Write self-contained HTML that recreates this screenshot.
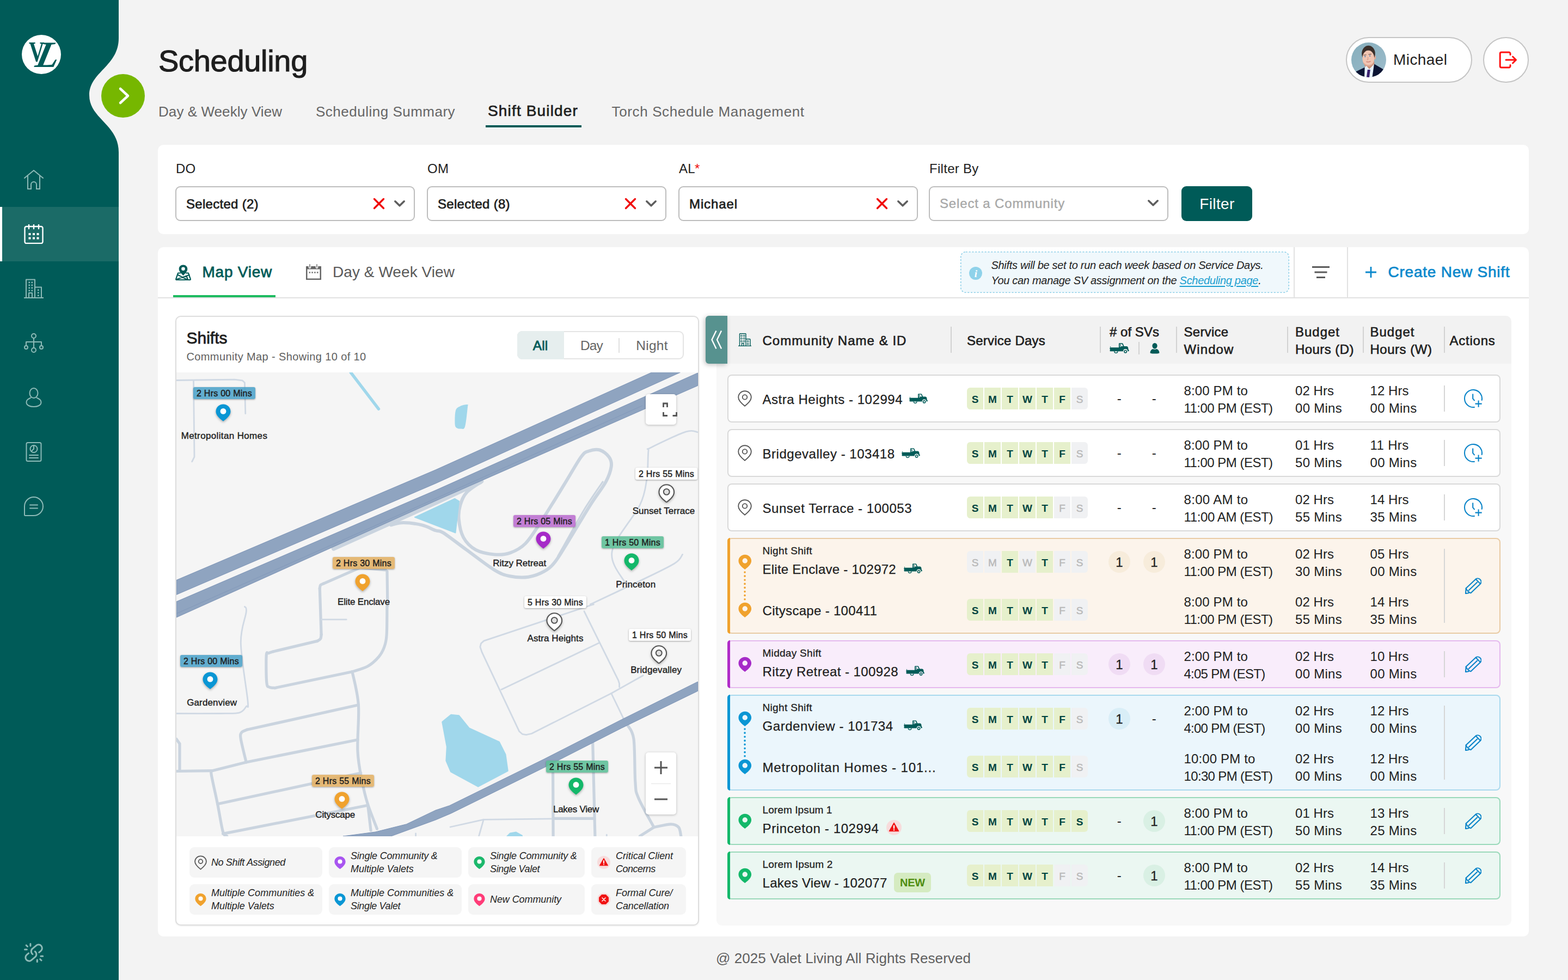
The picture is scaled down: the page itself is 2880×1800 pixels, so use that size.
<!DOCTYPE html>
<html lang="en"><head><meta charset="utf-8"><title>Scheduling - Shift Builder</title><style>
html,body{margin:0;padding:0}
body{width:2880px;height:1800px;position:relative;overflow:hidden;background:#f3f3f3;font-family:"Liberation Sans",sans-serif;}
.t{position:absolute;white-space:nowrap;margin:0}
.b{position:absolute;display:block}
@media (max-width:1500px){html{zoom:.5}}
</style></head>
<body>
<svg class="b" style="left:0px;top:0px;" width="240" height="1800" viewBox="0 0 240 1800"><path d="M0 0H218V70C218 122 164 132 164 175C164 218 218 228 218 280V1800H0Z" fill="#005b58"/></svg>
<div class="b" style="left:0px;top:380px;width:218px;height:100px;background:#1b6b67;"></div>
<div class="b" style="left:0px;top:380px;width:4px;height:100px;background:#ffffff;"></div>
<div class="b" style="left:40px;top:64px;width:72px;height:72px;background:#fff;border-radius:36px;"></div>
<div class="t" style="top:62.2px;font-size:52px;line-height:68px;color:#005b58;letter-spacing:0.00px;font-weight:700;left:52.5px;font-family:'Liberation Serif',serif;transform:scaleX(.76);transform-origin:0 50%;">V</div>
<div class="t" style="top:55.6px;font-size:68px;line-height:88px;color:#005b58;letter-spacing:0.00px;font-weight:700;font-style:italic;left:58.0px;font-family:'Liberation Serif',serif;transform:skewX(-13deg);transform-origin:0 100%;">L</div>
<div class="b" style="left:186px;top:136px;width:80px;height:80px;background:#76b700;border-radius:40px;"></div>
<svg class="b" style="left:186px;top:136px;" width="80" height="80" viewBox="0 0 80 80"><path d="M35 27L49 40L35 53" fill="none" stroke="#fff" stroke-width="4.5" stroke-linecap="round" stroke-linejoin="round"/></svg>
<svg class="b" style="left:44px;top:312px;" width="36" height="36" viewBox="0 0 36 36"><g fill="none" stroke="#8dbab7" stroke-width="2" stroke-linejoin="round" stroke-linecap="round"><path d="M1 15L18 1L35 15" stroke-linejoin="miter"/><path d="M7 11V35H13V27A5 5 0 0 1 23 27V35H29V11" stroke-linejoin="miter"/></g></svg>
<svg class="b" style="left:44px;top:412px;" width="36" height="36" viewBox="0 0 36 36"><g fill="none" stroke="#fff" stroke-width="2.4" stroke-linecap="round"><rect x="1.5" y="4" width="33" height="31" rx="3"/><path d="M9 0.5V8M18 0.5V8M27 0.5V8"/></g><rect x="8.5" y="16" width="4" height="4" fill="#fff" stroke="none"/><rect x="16" y="16" width="4" height="4" fill="#fff" stroke="none"/><rect x="23.5" y="16" width="4" height="4" fill="#fff" stroke="none"/><rect x="8.5" y="23.5" width="4" height="4" fill="#fff" stroke="none"/><rect x="16" y="23.5" width="4" height="4" fill="#fff" stroke="none"/><rect x="23.5" y="23.5" width="4" height="4" fill="#fff" stroke="none"/></svg>
<svg class="b" style="left:44px;top:512px;" width="36" height="36" viewBox="0 0 36 36"><g fill="none" stroke="#8dbab7" stroke-width="2" stroke-linejoin="round" stroke-linecap="round" stroke-linejoin="miter"><path d="M4 35V1.5H20V35M20 15.5H32V35M0.5 35H35.5M9 35V26H15V35"/></g><rect x="8.5" y="5.5" width="2.6" height="2.6" fill="#8dbab7"/><rect x="13.5" y="5.5" width="2.6" height="2.6" fill="#8dbab7"/><rect x="8.5" y="10.5" width="2.6" height="2.6" fill="#8dbab7"/><rect x="13.5" y="10.5" width="2.6" height="2.6" fill="#8dbab7"/><rect x="8.5" y="15.5" width="2.6" height="2.6" fill="#8dbab7"/><rect x="13.5" y="15.5" width="2.6" height="2.6" fill="#8dbab7"/><rect x="8.5" y="20.5" width="2.6" height="2.6" fill="#8dbab7"/><rect x="13.5" y="20.5" width="2.6" height="2.6" fill="#8dbab7"/><rect x="25" y="19.5" width="2.6" height="2.6" fill="#8dbab7"/><rect x="25" y="24.5" width="2.6" height="2.6" fill="#8dbab7"/><rect x="25" y="29.5" width="2.6" height="2.6" fill="#8dbab7"/></svg>
<svg class="b" style="left:44px;top:612px;" width="36" height="36" viewBox="0 0 36 36"><g fill="none" stroke="#8dbab7" stroke-width="2" stroke-linejoin="round" stroke-linecap="round"><circle cx="18" cy="5" r="4"/><circle cx="4" cy="26" r="3"/><circle cx="32" cy="26" r="3"/><circle cx="18" cy="31" r="4"/><path d="M18 9V27M4 23V16H32V23"/></g></svg>
<svg class="b" style="left:44px;top:712px;" width="36" height="36" viewBox="0 0 36 36"><g fill="none" stroke="#8dbab7" stroke-width="2" stroke-linejoin="round" stroke-linecap="round"><ellipse cx="18" cy="10" rx="7.5" ry="9"/><path d="M12.5 18.5C8 21 4.5 22 4.5 27C4.5 33 12 35 18 35C24 35 31.5 33 31.5 27C31.5 22 28 21 23.500 18.5"/></g></svg>
<svg class="b" style="left:44px;top:812px;" width="36" height="36" viewBox="0 0 36 36"><g fill="none" stroke="#8dbab7" stroke-width="2" stroke-linejoin="round" stroke-linecap="round"><rect x="4.500" y="1" width="27" height="34" rx="2.5"/><circle cx="18" cy="12.500" r="6.5"/><path d="M18 6V12.500L13.500 17M10 24H26M10 29H26"/></g></svg>
<svg class="b" style="left:44px;top:912px;" width="36" height="36" viewBox="0 0 36 36"><g fill="none" stroke="#8dbab7" stroke-width="2" stroke-linejoin="round" stroke-linecap="round"><path d="M18 1A17 17 0 0 1 18 35H2.500A1.500 1.500 0 0 1 1 33.500V18A17 17 0 0 1 18 1Z"/><path d="M11 15.500H25M11 21.500H25"/></g></svg>
<svg class="b" style="left:44px;top:1732px;" width="36" height="36" viewBox="0 0 36 36"><g fill="none" stroke="#8dbab7" stroke-width="3" stroke-linecap="round"><path d="M15.900 20.600A6.500 6.500 0 0 1 15.800 10.300L22.600 4.600A6.500 6.500 0 0 1 31 14.600L27.700 17.400"/><path d="M20.300 15.600A6.500 6.500 0 0 1 20.400 25.900L13.600 31.600A6.500 6.500 0 0 1 5.200 21.600L8.500 18.800"/><path d="M11.900 1.500V5.300M4.200 4.200L6.500 6.500M1.500 11.900H5.300M24.300 34.700V30.900M32 32L29.700 29.700M34.700 24.300H30.900"/></g></svg>
<div class="t" style="top:74.6px;font-size:56px;line-height:73px;color:#1e1e1e;letter-spacing:-0.31px;-webkit-text-stroke:1.1px #1e1e1e;left:291.0px;">Scheduling</div>
<div class="t" style="top:188.0px;font-size:26px;line-height:34px;color:#666;letter-spacing:0.07px;left:291.0px;">Day &amp; Weekly View</div>
<div class="t" style="top:188.0px;font-size:26px;line-height:34px;color:#666;letter-spacing:0.50px;left:580.0px;">Scheduling Summary</div>
<div class="t" style="top:186.3px;font-size:28px;line-height:36px;color:#1e1e1e;letter-spacing:1.16px;-webkit-text-stroke:0.7px #1e1e1e;left:896.0px;">Shift Builder</div>
<div class="t" style="top:188.0px;font-size:26px;line-height:34px;color:#666;letter-spacing:0.64px;left:1123.5px;">Torch Schedule Management</div>
<div class="b" style="left:892px;top:230px;width:176px;height:4px;background:#005b58;"></div>
<div class="b" style="left:2472px;top:68px;width:232px;height:84px;background:#fff;border:2px solid #c4c4c4;border-radius:42px;box-sizing:border-box;"></div>
<svg class="b" style="left:2482px;top:78px;" width="64" height="64" viewBox="0 0 64 64"><defs><clipPath id="avc"><circle cx="32" cy="32" r="32"/></clipPath><linearGradient id="avg" x1="0" y1="0" x2="1" y2="1"><stop offset="0" stop-color="#86aebc"/><stop offset="1" stop-color="#9dbccb"/></linearGradient></defs><g clip-path="url(#avc)"><rect width="64" height="64" fill="url(#avg)"/><path d="M24.500 38L42 33.500L42.500 42L33 52L25 46Z" fill="#c98f78"/><path d="M24.600 45.700L27.500 42.500L33 49L42 39.500L38.500 64H24Z" fill="#e6f1fa"/><path d="M0 64L8.500 53.500L24.600 45.700L24 64Z" fill="#0c1433"/><path d="M38.500 64L42 39.500L58.600 49.200L64 58V64Z" fill="#0c1433"/><path d="M29.800 50H34.800L33 64H28Z" fill="#3a2070"/><ellipse cx="43.200" cy="27.500" rx="1.900" ry="3.800" fill="#e2a995"/><ellipse cx="31.500" cy="20.500" rx="12.300" ry="14.800" fill="#3b2f2a"/><ellipse cx="31.300" cy="29.300" rx="10.900" ry="14.800" fill="#f0c5b2"/><path d="M21 35C23 41.500 27 44.100 31.500 44.100C36 44.100 40.500 40.500 42 34C40 39 36 41.500 32 41.500C27.500 41.500 23.500 39 21 35Z" fill="#dca48f"/><path d="M21.500 20C24 15.500 29 13.500 33 14.500C37 15 40.500 18 41.500 22.500C42.500 16 40 11 33 10.500C26 10 22 14 21.500 20Z" fill="#3b2f2a"/><circle cx="25.300" cy="25.900" r="1.100" fill="#4a7ab5"/><circle cx="34.200" cy="24.700" r="1.100" fill="#4a7ab5"/><path d="M22.500 23.300L27.500 22.800M31.500 22L36.800 21.300" stroke="#5a4338" stroke-width="1"/><path d="M27.500 35.400C30 36.200 33 35.800 35.500 34.600" stroke="#c9786f" stroke-width="1.300" fill="none"/><path d="M30.500 27V31.500L28.800 32.300" stroke="#d79a86" stroke-width="1.100" fill="none"/></g></svg>
<div class="t" style="top:91.8px;font-size:28px;line-height:36px;color:#1e1e1e;letter-spacing:0.43px;left:2559.0px;">Michael</div>
<div class="b" style="left:2724px;top:68px;width:84px;height:84px;background:#fff;border:2px solid #c4c4c4;border-radius:42px;box-sizing:border-box;"></div>
<svg class="b" style="left:2748px;top:92px;" width="40" height="40" viewBox="0 0 40 40"><g fill="none" stroke="#ff1010" stroke-width="3" stroke-linecap="round" stroke-linejoin="round"><path d="M26 8.500V6.500A2.500 2.500 0 0 0 23.500 4H9.700A2.500 2.500 0 0 0 7.200 6.500V29.500A2.500 2.500 0 0 0 9.700 32H23.500A2.500 2.500 0 0 0 26 29.500V27.500"/><path d="M18 18H36.500M30.500 12L36.500 18L30.500 24"/></g></svg>
<div class="b" style="left:290px;top:266px;width:2518px;height:164px;background:#fff;border-radius:10px;"></div>
<div class="t" style="top:294.2px;font-size:24px;line-height:31px;color:#1e1e1e;letter-spacing:0.29px;left:323.0px;">DO</div>
<div class="b" style="left:322px;top:342px;width:440px;height:63.5px;background:#fff;border:2px solid #bdbdbd;border-radius:9px;box-sizing:border-box;"></div>
<div class="t" style="top:359.2px;font-size:24px;line-height:31px;color:#1e1e1e;letter-spacing:0.29px;-webkit-text-stroke:0.7px #1e1e1e;left:342.0px;">Selected (2)</div>
<svg class="b" style="left:685px;top:363px;" width="22" height="22" viewBox="0 0 22 22"><path d="M2.500 2.500L19.500 19.500M19.500 2.500L2.500 19.500" fill="none" stroke="#f00a0a" stroke-width="3.4" stroke-linecap="round"/></svg>
<svg class="b" style="left:722px;top:366px;" width="24" height="16" viewBox="0 0 24 16"><path d="M3.800 3.800L12 11.800L20.200 3.800" fill="none" stroke="#5e5e5e" stroke-width="3.600" stroke-linecap="round" stroke-linejoin="round"/></svg>
<div class="t" style="top:294.2px;font-size:24px;line-height:31px;color:#1e1e1e;letter-spacing:0.29px;left:785.0px;">OM</div>
<div class="b" style="left:784px;top:342px;width:440px;height:63.5px;background:#fff;border:2px solid #bdbdbd;border-radius:9px;box-sizing:border-box;"></div>
<div class="t" style="top:359.2px;font-size:24px;line-height:31px;color:#1e1e1e;letter-spacing:0.29px;-webkit-text-stroke:0.7px #1e1e1e;left:804.0px;">Selected (8)</div>
<svg class="b" style="left:1147px;top:363px;" width="22" height="22" viewBox="0 0 22 22"><path d="M2.500 2.500L19.500 19.500M19.500 2.500L2.500 19.500" fill="none" stroke="#f00a0a" stroke-width="3.4" stroke-linecap="round"/></svg>
<svg class="b" style="left:1184px;top:366px;" width="24" height="16" viewBox="0 0 24 16"><path d="M3.800 3.800L12 11.800L20.200 3.800" fill="none" stroke="#5e5e5e" stroke-width="3.600" stroke-linecap="round" stroke-linejoin="round"/></svg>
<div class="t" style="top:294.2px;font-size:24px;line-height:31px;color:#1e1e1e;letter-spacing:0.29px;left:1247.0px;">AL</div>
<div class="t" style="top:294.2px;font-size:24px;line-height:31px;color:#ee1111;letter-spacing:0.29px;left:1276.0px;">*</div>
<div class="b" style="left:1246px;top:342px;width:440px;height:63.5px;background:#fff;border:2px solid #bdbdbd;border-radius:9px;box-sizing:border-box;"></div>
<div class="t" style="top:359.2px;font-size:24px;line-height:31px;color:#1e1e1e;letter-spacing:0.90px;-webkit-text-stroke:0.7px #1e1e1e;left:1266.0px;">Michael</div>
<svg class="b" style="left:1609px;top:363px;" width="22" height="22" viewBox="0 0 22 22"><path d="M2.500 2.500L19.500 19.500M19.500 2.500L2.500 19.500" fill="none" stroke="#f00a0a" stroke-width="3.4" stroke-linecap="round"/></svg>
<svg class="b" style="left:1646px;top:366px;" width="24" height="16" viewBox="0 0 24 16"><path d="M3.800 3.800L12 11.800L20.200 3.800" fill="none" stroke="#5e5e5e" stroke-width="3.600" stroke-linecap="round" stroke-linejoin="round"/></svg>
<div class="t" style="top:294.2px;font-size:24px;line-height:31px;color:#1e1e1e;letter-spacing:0.29px;left:1707.0px;">Filter By</div>
<div class="b" style="left:1706px;top:342px;width:440px;height:63.5px;background:#fff;border:2px solid #bdbdbd;border-radius:9px;box-sizing:border-box;"></div>
<div class="t" style="top:358.2px;font-size:24px;line-height:31px;color:#a8a8a8;letter-spacing:0.85px;-webkit-text-stroke:0.4px #a8a8a8;left:1726.0px;">Select a Community</div>
<svg class="b" style="left:2106px;top:365px;" width="24" height="16" viewBox="0 0 24 16"><path d="M3.800 3.800L12 11.800L20.200 3.800" fill="none" stroke="#5e5e5e" stroke-width="3.600" stroke-linecap="round" stroke-linejoin="round"/></svg>
<div class="b" style="left:2170px;top:342px;width:130px;height:64px;background:#005b58;border-radius:9px;"></div>
<div class="t" style="top:356.6px;font-size:28px;line-height:36px;color:#fff;letter-spacing:0.38px;left:2235.5px;transform:translateX(-50%);">Filter</div>
<div class="b" style="left:290px;top:454px;width:2518px;height:1266px;background:#fff;border-radius:10px;"></div>
<div class="b" style="left:290px;top:546px;width:2518px;height:2px;background:#e2e2e2;"></div>
<svg class="b" style="left:322px;top:486px;" width="29" height="29" viewBox="0 0 29 29"><g fill="none" stroke="#005b58" stroke-width="2.200" stroke-linejoin="round" stroke-linecap="round"><path d="M9 15.500H5L1.200 26.500A1.300 1.300 0 0 0 2.500 28.200H26.500A1.300 1.300 0 0 0 27.800 26.500L24 15.500H20"/><path d="M4 18.500L21.500 27.500M25.500 19L2.500 27M20.500 21L23 27.500"/></g><path d="M14.500 0.500C10 0.500 6.700 3.800 6.700 8C6.700 12.500 11 16.500 14.500 20C18 16.500 22.300 12.500 22.300 8C22.300 3.800 19 0.500 14.500 0.500Z" fill="#005b58"/><circle cx="14.500" cy="7.800" r="3.300" fill="#fff"/></svg>
<div class="t" style="top:482.3px;font-size:28px;line-height:36px;color:#005b58;letter-spacing:0.76px;-webkit-text-stroke:0.8px #005b58;left:371.5px;">Map View</div>
<div class="b" style="left:318px;top:542px;width:188px;height:4px;background:#1dbb60;"></div>
<svg class="b" style="left:562px;top:485px;" width="28" height="29" viewBox="0 0 28 29"><path d="M0 4H28V29H0Z" fill="#666"/><path d="M2.500 9.500H25.500V26.500H2.500Z" fill="#fff"/><path d="M7 0V6M20 0V6" stroke="#fff" stroke-width="4.500" stroke-linecap="round"/><path d="M7 0.800V6M20 0.800V6" stroke="#777" stroke-width="1.600" stroke-linecap="round"/><rect x="5.5" y="14.200" width="2.600" height="2.600" fill="#777"/><rect x="10.3" y="14.200" width="2.600" height="2.600" fill="#777"/><rect x="15.1" y="14.200" width="2.600" height="2.600" fill="#777"/><rect x="19.9" y="14.200" width="2.600" height="2.600" fill="#777"/></svg>
<div class="t" style="top:482.3px;font-size:28px;line-height:36px;color:#5a5a5a;letter-spacing:0.06px;left:611.0px;">Day &amp; Week View</div>
<svg class="b" style="left:1763px;top:461px;" width="606" height="78" viewBox="0 0 606 78"><rect x="1.750" y="1.750" width="602.500" height="74.500" rx="9" fill="#f0f8fc" stroke="#8fd0e8" stroke-width="1.600" stroke-dasharray="3.200 2.600"/></svg>
<div class="b" style="left:1780px;top:490px;width:24px;height:24px;background:#8fd2ea;border-radius:12px;"></div>
<div class="t" style="top:489.9px;font-size:19px;line-height:25px;color:#fff;letter-spacing:0.00px;font-weight:700;font-style:italic;left:1792.5px;transform:translateX(-50%);font-family:'Liberation Serif',serif;">i</div>
<div class="t" style="top:473.6px;font-size:20px;line-height:26px;color:#1e1e1e;letter-spacing:-0.31px;font-style:italic;left:1820.5px;">Shifts will be set to run each week based on Service Days.</div>
<div class="t" style="top:502.1px;font-size:20px;line-height:26px;color:#1e1e1e;letter-spacing:-0.30px;font-style:italic;left:1820.5px;">You can manage SV assignment on the <span style="color:#1b9fd0;text-decoration:underline;text-decoration-thickness:1.500px;text-underline-offset:3px">Scheduling page</span>.</div>
<div class="b" style="left:2376px;top:454px;width:2px;height:92px;background:#e2e2e2;"></div>
<div class="b" style="left:2474px;top:454px;width:2px;height:92px;background:#e2e2e2;"></div>
<svg class="b" style="left:2408px;top:486px;" width="36" height="28" viewBox="0 0 36 28"><path d="M2 4.500H34M6.500 14H29.500M10 23.500H26" stroke="#5a5a5a" stroke-width="3"/></svg>
<svg class="b" style="left:2506px;top:488px;" width="24" height="24" viewBox="0 0 24 24"><path d="M12 2V22M2 12H22" stroke="#0a88cc" stroke-width="2.800"/></svg>
<div class="t" style="top:481.8px;font-size:28px;line-height:36px;color:#0a88cc;letter-spacing:0.77px;-webkit-text-stroke:0.7px #0a88cc;left:2549.5px;">Create New Shift</div>
<div class="b" style="left:322px;top:580px;width:962px;height:1120px;background:#fff;border:2px solid #dedede;border-radius:10px;box-sizing:border-box;box-shadow:0 1px 3px rgba(0,0,0,.08);"></div>
<div class="t" style="top:600.6px;font-size:30px;line-height:39px;color:#1e1e1e;letter-spacing:-0.01px;-webkit-text-stroke:0.8px #1e1e1e;left:342.5px;">Shifts</div>
<div class="t" style="top:642.1px;font-size:20px;line-height:26px;color:#5f5f5f;letter-spacing:0.38px;left:342.5px;">Community Map - Showing 10 of 10</div>
<div class="b" style="left:950px;top:608px;width:306px;height:52px;background:#fff;border:2px solid #e4e4e4;border-radius:9px;box-sizing:border-box;"></div>
<div class="b" style="left:950px;top:608px;width:86px;height:52px;background:#e6eeee;border-radius:9px 0 0 9px;"></div>
<div class="b" style="left:1136px;top:620.5px;width:2px;height:27px;background:#e0e0e0;"></div>
<div class="t" style="top:618.5px;font-size:24.5px;line-height:32px;color:#005b58;letter-spacing:0.09px;-webkit-text-stroke:0.8px #005b58;left:992.5px;transform:translateX(-50%);">All</div>
<div class="t" style="top:618.5px;font-size:24.5px;line-height:32px;color:#666;letter-spacing:-0.85px;left:1086.5px;transform:translateX(-50%);">Day</div>
<div class="t" style="top:618.5px;font-size:24.5px;line-height:32px;color:#666;letter-spacing:0.30px;left:1197.5px;transform:translateX(-50%);">Night</div>
<div class="b" style="left:348px;top:1556px;width:244px;height:56px;background:#f5f5f5;border-radius:9px;"></div>
<svg class="b" style="left:356.5px;top:1571px;" width="23" height="27" viewBox="0 0 28 32"><path d="M14 1.200C7 1.200 1.300 6.700 1.300 13.700C1.300 21 8.800 26.800 14 30.800C19.200 26.800 26.700 21 26.700 13.700C26.700 6.700 21 1.200 14 1.200Z" fill="none" stroke="#5a5a5a" stroke-width="2.2"/><circle cx="14" cy="13.200" r="4.6" fill="none" stroke="#5a5a5a" stroke-width="2.2"/></svg>
<div class="t" style="top:1572.8px;font-size:18px;line-height:23px;color:#1e1e1e;letter-spacing:-0.38px;font-style:italic;left:388.0px;">No Shift Assigned</div>
<div class="b" style="left:604px;top:1556px;width:244px;height:56px;background:#f5f5f5;border-radius:9px;"></div>
<svg class="b" style="left:613.5px;top:1571.5px;" width="21" height="25" viewBox="0 0 28 32"><path d="M14 0.500C6.500 0.500 0.500 6.400 0.500 13.700C0.500 21.500 8.500 27.500 14 31.700C19.500 27.500 27.500 21.500 27.500 13.700C27.500 6.400 21.500 0.500 14 0.500Z" fill="#a855f0"/><circle cx="14" cy="13.400" r="5.400" fill="#fff"/></svg>
<div class="t" style="top:1560.8px;font-size:18px;line-height:23px;color:#1e1e1e;letter-spacing:-0.19px;font-style:italic;left:644.0px;">Single Community &amp;</div>
<div class="t" style="top:1584.8px;font-size:18px;line-height:23px;color:#1e1e1e;letter-spacing:-0.04px;font-style:italic;left:644.0px;">Multiple Valets</div>
<div class="b" style="left:860px;top:1556px;width:214px;height:56px;background:#f5f5f5;border-radius:9px;"></div>
<svg class="b" style="left:869.5px;top:1571.5px;" width="21" height="25" viewBox="0 0 28 32"><path d="M14 0.500C6.500 0.500 0.500 6.400 0.500 13.700C0.500 21.500 8.500 27.500 14 31.700C19.500 27.500 27.500 21.500 27.500 13.700C27.500 6.400 21.500 0.500 14 0.500Z" fill="#1cb86c"/><circle cx="14" cy="13.400" r="5.400" fill="#fff"/></svg>
<div class="t" style="top:1560.8px;font-size:18px;line-height:23px;color:#1e1e1e;letter-spacing:-0.19px;font-style:italic;left:900.0px;">Single Community &amp;</div>
<div class="t" style="top:1584.8px;font-size:18px;line-height:23px;color:#1e1e1e;letter-spacing:-0.35px;font-style:italic;left:900.0px;">Single Valet</div>
<div class="b" style="left:1086px;top:1556px;width:174px;height:56px;background:#f5f5f5;border-radius:9px;"></div>
<svg class="b" style="left:1096.5px;top:1572px;" width="24" height="24" viewBox="0 0 28 28"><circle cx="14" cy="14" r="14" fill="#f7dcdc"/><path d="M14 5.500L22.500 20.500H5.500Z" fill="#f01414" stroke="#f01414" stroke-width="1.500" stroke-linejoin="round"/><path d="M14 10.500V15.500" stroke="#fff" stroke-width="2.200" stroke-linecap="round"/><circle cx="14" cy="18.400" r="1.200" fill="#fff"/></svg>
<div class="t" style="top:1560.8px;font-size:18px;line-height:23px;color:#1e1e1e;letter-spacing:-0.07px;font-style:italic;left:1131.0px;">Critical Client</div>
<div class="t" style="top:1584.8px;font-size:18px;line-height:23px;color:#1e1e1e;letter-spacing:-0.53px;font-style:italic;left:1131.0px;">Concerns</div>
<div class="b" style="left:348px;top:1624px;width:244px;height:56px;background:#f5f5f5;border-radius:9px;"></div>
<svg class="b" style="left:357.5px;top:1639.5px;" width="21" height="25" viewBox="0 0 28 32"><path d="M14 0.500C6.500 0.500 0.500 6.400 0.500 13.700C0.500 21.500 8.500 27.500 14 31.700C19.500 27.500 27.500 21.500 27.500 13.700C27.500 6.400 21.500 0.500 14 0.500Z" fill="#f0a22e"/><circle cx="14" cy="13.400" r="5.400" fill="#fff"/></svg>
<div class="t" style="top:1628.8px;font-size:18px;line-height:23px;color:#1e1e1e;letter-spacing:0.01px;font-style:italic;left:388.0px;">Multiple Communities &amp;</div>
<div class="t" style="top:1652.8px;font-size:18px;line-height:23px;color:#1e1e1e;letter-spacing:-0.04px;font-style:italic;left:388.0px;">Multiple Valets</div>
<div class="b" style="left:604px;top:1624px;width:244px;height:56px;background:#f5f5f5;border-radius:9px;"></div>
<svg class="b" style="left:613.5px;top:1639.5px;" width="21" height="25" viewBox="0 0 28 32"><path d="M14 0.500C6.500 0.500 0.500 6.400 0.500 13.700C0.500 21.500 8.500 27.500 14 31.700C19.500 27.500 27.500 21.500 27.500 13.700C27.500 6.400 21.500 0.500 14 0.500Z" fill="#0a96d4"/><circle cx="14" cy="13.400" r="5.400" fill="#fff"/></svg>
<div class="t" style="top:1628.8px;font-size:18px;line-height:23px;color:#1e1e1e;letter-spacing:0.01px;font-style:italic;left:644.0px;">Multiple Communities &amp;</div>
<div class="t" style="top:1652.8px;font-size:18px;line-height:23px;color:#1e1e1e;letter-spacing:-0.35px;font-style:italic;left:644.0px;">Single Valet</div>
<div class="b" style="left:860px;top:1624px;width:214px;height:56px;background:#f5f5f5;border-radius:9px;"></div>
<svg class="b" style="left:869.5px;top:1639.5px;" width="21" height="25" viewBox="0 0 28 32"><path d="M14 0.500C6.500 0.500 0.500 6.400 0.500 13.700C0.500 21.500 8.500 27.500 14 31.700C19.500 27.500 27.500 21.500 27.500 13.700C27.500 6.400 21.500 0.500 14 0.500Z" fill="#ff3c78"/><circle cx="14" cy="13.400" r="5.400" fill="#fff"/></svg>
<div class="t" style="top:1640.8px;font-size:18px;line-height:23px;color:#1e1e1e;letter-spacing:-0.08px;font-style:italic;left:900.0px;">New Community</div>
<div class="b" style="left:1086px;top:1624px;width:174px;height:56px;background:#f5f5f5;border-radius:9px;"></div>
<svg class="b" style="left:1096.5px;top:1640px;" width="24" height="24" viewBox="0 0 28 28"><circle cx="14" cy="14" r="14" fill="#f7dcdc"/><path d="M9.500 3.500H18.500L24.500 9.500V18.500L18.500 24.500H9.500L3.500 18.500V9.500Z" fill="#f01414"/><path d="M10.500 10.500L17.500 17.500M17.500 10.500L10.500 17.500" stroke="#fff" stroke-width="1.800" stroke-linecap="round"/></svg>
<div class="t" style="top:1628.8px;font-size:18px;line-height:23px;color:#1e1e1e;letter-spacing:-0.06px;font-style:italic;left:1131.0px;">Formal Cure/</div>
<div class="t" style="top:1652.8px;font-size:18px;line-height:23px;color:#1e1e1e;letter-spacing:-0.09px;font-style:italic;left:1131.0px;">Cancellation</div>
<div class="t" style="top:1742.5px;font-size:26px;line-height:34px;color:#5f5f5f;letter-spacing:0.07px;left:1549.0px;transform:translateX(-50%);">@ 2025 Valet Living All Rights Reserved</div>
<svg class="b" style="left:324px;top:684px;overflow:hidden;" width="958" height="852" viewBox="0 0 958 852"><rect width="958" height="852" fill="#f5f5f5"/><path d="M-0.6 14.5 L106.9 13.1 L121.1 14.8 L125.4 18.7 L126.8 75.6" fill="none" stroke="#d0d9e4" stroke-width="2.8" stroke-linecap="round" stroke-linejoin="round"/><path d="M31.5 14.5 L33.0 155.2 L28.7 163.8" fill="none" stroke="#d0d9e4" stroke-width="2.8" stroke-linecap="round" stroke-linejoin="round"/><path d="M957.5 109.8 C953.8 109.7 949.7 104.4 935.3 109.2 C920.9 113.9 882.7 132.4 871.3 138.2 C859.9 144.0 868.0 137.2 867.0 143.9 C866.1 150.5 866.1 169.5 865.6 178.0 C865.1 186.5 866.6 184.2 864.2 195.1 C861.8 206.0 862.1 221.1 851.4 243.4 C840.7 265.7 804.7 304.8 800.2 328.7 C795.7 352.7 820.3 377.3 824.4 387.0" fill="none" stroke="#d0d9e4" stroke-width="2.8" stroke-linecap="round" stroke-linejoin="round"/><path d="M929.6 334.4 C927.0 337.3 927.9 343.0 914.0 351.5 C900.0 360.0 871.3 373.2 845.7 385.6 C820.1 398.0 774.6 419.3 760.4 426.0" fill="none" stroke="#d0d9e4" stroke-width="2.8" stroke-linecap="round" stroke-linejoin="round"/><path d="M561.3 200.2 C556.6 203.6 539.5 213.5 532.9 220.7 C526.2 227.9 523.9 235.4 521.5 243.4 C519.1 251.5 517.7 259.1 518.7 269.0 C519.6 279.0 522.0 293.7 527.2 303.1 C532.4 312.6 540.5 320.7 549.9 325.9 C559.4 331.1 573.6 333.5 584.1 334.4 C594.5 335.4 603.0 334.9 612.5 331.6 C622.0 328.3 631.5 324.0 640.9 314.5 C650.4 305.0 657.5 292.7 669.4 274.7 C681.2 256.7 699.7 226.4 712.0 206.4 C724.4 186.5 735.7 165.6 743.3 155.3 C750.9 144.9 751.9 146.6 757.5 144.5 C763.2 142.3 771.3 140.7 777.5 142.5 C783.6 144.3 791.0 150.3 794.5 155.3 C798.1 160.2 799.7 164.7 798.8 172.3 C797.8 179.9 795.2 188.9 788.8 200.8 C782.4 212.6 771.8 225.4 760.4 243.4 C749.0 261.4 731.5 291.3 720.6 308.8 C709.7 326.4 702.6 339.2 695.0 348.6 C687.4 358.1 683.1 361.2 675.1 365.7 C667.0 370.2 657.1 374.2 646.6 375.7 C636.2 377.1 622.9 376.4 612.5 374.2 C602.1 372.1 597.3 370.9 584.1 362.9 C570.8 354.8 548.5 337.3 532.9 325.9 C517.2 314.5 499.7 300.5 490.2 294.6 C480.7 288.7 482.5 292.7 476.0 290.3 C469.5 288.0 460.8 282.7 451.0 280.4 C441.1 278.0 426.3 276.1 416.8 276.1 C407.4 276.1 397.9 279.6 394.1 280.4" fill="none" stroke="#cad4df" stroke-width="6" stroke-linecap="round" stroke-linejoin="round"/><path d="M783.1 200.8 C777.5 209.3 760.9 232.5 749.0 252.0 C737.2 271.4 720.1 303.1 712.0 317.4 C704.0 331.6 702.6 333.9 700.7 337.3" fill="none" stroke="#cad4df" stroke-width="3" stroke-linecap="round" stroke-linejoin="round"/><path d="M288.9 323.6 L476.6 239.4 L558.5 201.3" fill="none" stroke="#cad4df" stroke-width="8" stroke-linecap="round" stroke-linejoin="round"/><path d="M387.0 365.7 C387.1 375.7 387.8 415.9 387.8 425.9 C387.8 436.0 387.3 416.5 387.0 426.0 C386.7 435.5 387.1 469.6 386.1 482.9 C385.2 496.1 383.8 499.0 381.3 505.6 C378.8 512.3 376.3 517.0 371.4 522.7 C366.4 528.4 359.5 535.2 351.4 539.7 C343.4 544.2 327.8 548.0 323.0 549.7" fill="none" stroke="#cad4df" stroke-width="5.2" stroke-linecap="round" stroke-linejoin="round"/><path d="M323.0 549.7 L180.8 579.6" fill="none" stroke="#cad4df" stroke-width="5.2" stroke-linecap="round" stroke-linejoin="round"/><path d="M180.8 579.6 C179.2 579.3 173.4 579.8 170.9 578.1 C168.4 576.5 166.7 579.3 165.8 569.6 C164.8 559.9 164.6 528.8 165.2 519.8 C165.8 510.8 167.3 516.8 169.5 515.6 C171.6 514.4 176.6 513.2 178.0 512.7" fill="none" stroke="#cad4df" stroke-width="5.2" stroke-linecap="round" stroke-linejoin="round"/><path d="M178.0 512.7 L259.0 493.4" fill="none" stroke="#cad4df" stroke-width="5.2" stroke-linecap="round" stroke-linejoin="round"/><path d="M259.0 493.4 C260.0 492.7 263.5 491.1 264.7 489.1 C265.9 487.1 265.9 482.7 266.1 481.4" fill="none" stroke="#cad4df" stroke-width="5.2" stroke-linecap="round" stroke-linejoin="round"/><path d="M266.1 481.4 L263.3 396.9" fill="none" stroke="#cad4df" stroke-width="5.2" stroke-linecap="round" stroke-linejoin="round"/><path d="M263.3 396.9 C263.5 395.9 263.5 392.2 264.7 390.7 C265.9 389.2 269.5 388.3 270.4 387.8" fill="none" stroke="#cad4df" stroke-width="5.2" stroke-linecap="round" stroke-linejoin="round"/><path d="M270.4 387.8 L337.2 358.6 L384.1 362.8" fill="none" stroke="#cad4df" stroke-width="5.2" stroke-linecap="round" stroke-linejoin="round"/><path d="M266.1 453.9 L312.2 453.9" fill="none" stroke="#d0d9e4" stroke-width="2.8" stroke-linecap="round" stroke-linejoin="round"/><path d="M125.4 430.3 C125.9 431.9 129.4 429.1 128.2 440.2 C127.0 451.4 117.8 469.8 118.3 497.1 C118.7 524.3 129.4 584.3 131.1 603.7 C132.7 623.2 130.8 610.1 128.2 613.7 C125.6 617.2 123.2 622.9 115.4 625.1 C107.6 627.2 100.5 626.2 81.3 626.5 C62.1 626.7 13.5 626.5 -0.0 626.5" fill="none" stroke="#d0d9e4" stroke-width="2.8" stroke-linecap="round" stroke-linejoin="round"/><path d="M323.0 549.7 C324.9 559.9 332.7 586.4 334.4 610.8 C336.0 635.2 331.8 672.4 333.0 696.1 C334.1 719.8 338.4 736.9 341.5 753.0 C344.6 769.1 346.9 778.6 351.4 792.8 C355.9 807.0 365.7 830.7 368.5 838.3" fill="none" stroke="#cad4df" stroke-width="5.2" stroke-linecap="round" stroke-linejoin="round"/><path d="M351.4 792.8 L357.1 841.2" fill="none" stroke="#cad4df" stroke-width="5.2" stroke-linecap="round" stroke-linejoin="round"/><path d="M334.4 610.8 L129.6 656.3" fill="none" stroke="#cad4df" stroke-width="5.2" stroke-linecap="round" stroke-linejoin="round"/><path d="M129.6 656.3 C128.0 657.2 121.6 658.6 119.7 661.4 C117.8 664.3 116.9 664.3 118.3 673.4 C119.7 682.5 126.6 708.9 128.2 716.0" fill="none" stroke="#cad4df" stroke-width="5.2" stroke-linecap="round" stroke-linejoin="round"/><path d="M333.0 674.8 L128.2 716.0 L65.7 731.7 L-0.0 732.5" fill="none" stroke="#cad4df" stroke-width="5.2" stroke-linecap="round" stroke-linejoin="round"/><path d="M-0.0 673.4 L6.0 681.9 L6.0 731.7" fill="none" stroke="#cad4df" stroke-width="5.2" stroke-linecap="round" stroke-linejoin="round"/><path d="M65.7 731.7 C65.4 732.9 62.6 728.6 64.2 738.8 C65.9 749.0 72.1 775.3 75.6 792.8 C79.2 810.4 82.7 834.2 85.6 844.0 C88.4 853.8 91.5 850.4 92.7 851.7" fill="none" stroke="#cad4df" stroke-width="5.2" stroke-linecap="round" stroke-linejoin="round"/><path d="M75.6 792.8 L338.7 735.9" fill="none" stroke="#cad4df" stroke-width="5.2" stroke-linecap="round" stroke-linejoin="round"/><path d="M85.6 847.4 L348.6 795.7" fill="none" stroke="#cad4df" stroke-width="5.2" stroke-linecap="round" stroke-linejoin="round"/><path d="M766.1 426.0 L564.7 493.1 L559.6 497.7 L557.9 504.2 L561.3 514.2 L629.6 659.2 L635.3 664.3 L642.4 665.7 L652.3 663.5 L798.8 589.5 L857.1 556.8" fill="none" stroke="#d0d9e4" stroke-width="2.8" stroke-linecap="round" stroke-linejoin="round"/><path d="M749.0 438.8 L811.6 565.4 L813.6 571.6 L813.6 578.1" fill="none" stroke="#d0d9e4" stroke-width="2.8" stroke-linecap="round" stroke-linejoin="round"/><path d="M596.9 582.4 L776.0 497.1" fill="none" stroke="#d0d9e4" stroke-width="2.8" stroke-linecap="round" stroke-linejoin="round"/><path d="M798.8 589.5 L821.5 636.4" fill="none" stroke="#d0d9e4" stroke-width="2.8" stroke-linecap="round" stroke-linejoin="round"/><path d="M760.4 426.0 L766.1 426.0" fill="none" stroke="#d0d9e4" stroke-width="2.8" stroke-linecap="round" stroke-linejoin="round"/><path d="M828.6 647.8 C830.5 652.1 837.6 655.9 840.0 673.4 C842.4 691.0 841.4 735.0 842.9 753.0 C844.3 771.1 842.9 767.7 848.6 781.5 C854.2 795.2 872.2 826.5 877.0 835.5" fill="none" stroke="#cad4df" stroke-width="5.2" stroke-linecap="round" stroke-linejoin="round"/><path d="M764.7 679.1 L768.9 851.7" fill="none" stroke="#cad4df" stroke-width="5.2" stroke-linecap="round" stroke-linejoin="round"/><path d="M691.6 736.0 L692.1 851.7" fill="none" stroke="#cad4df" stroke-width="5.2" stroke-linecap="round" stroke-linejoin="round"/><path d="M692.1 819.3 L767.5 819.3" fill="none" stroke="#cad4df" stroke-width="5.2" stroke-linecap="round" stroke-linejoin="round"/><path d="M503.0 835.0 L564.2 821.3 L689.3 819.9" fill="none" stroke="#d0d9e4" stroke-width="2.8" stroke-linecap="round" stroke-linejoin="round"/><path d="M564.2 821.3 L555.6 851.7" fill="none" stroke="#d0d9e4" stroke-width="2.8" stroke-linecap="round" stroke-linejoin="round"/><path d="M877.0 835.5 C882.2 834.6 900.7 829.8 908.3 829.8 C915.9 829.8 919.4 831.9 922.5 835.5 C925.6 839.2 926.0 849.0 926.8 851.7" fill="none" stroke="#cad4df" stroke-width="5.2" stroke-linecap="round" stroke-linejoin="round"/><path d="M877.0 835.5 L851.4 851.7" fill="none" stroke="#cad4df" stroke-width="5.2" stroke-linecap="round" stroke-linejoin="round"/><path d="M439.6 846.8 L439.6 851.7" fill="none" stroke="#d0d9e4" stroke-width="2.8" stroke-linecap="round" stroke-linejoin="round"/><path d="M790.3 851.7 L790.3 849.2" fill="none" stroke="#d0d9e4" stroke-width="2.8" stroke-linecap="round" stroke-linejoin="round"/><path d="M320.2 -0.0 L371.4 67.1" stroke="#a0d7eb" stroke-width="5.500" stroke-linecap="round" fill="none"/><path d="M513.0 69.9 C514.6 64.6 517.9 63.8 521.5 62.0 C525.1 60.2 532.1 58.8 534.3 59.1 C536.5 59.5 535.6 57.5 534.9 64.3 C534.2 71.0 532.0 93.3 530.0 99.8 C528.0 106.3 525.5 103.2 522.9 103.5 C520.3 103.8 516.3 103.4 514.4 101.8 C512.5 100.2 511.8 99.4 511.5 94.1 C511.3 88.8 511.3 75.3 513.0 69.9Z" fill="#a0d7eb"/><path d="M438.0 266.0 L511.5 232.0 L519.0 236.5 L512.5 294.5Z" fill="#a0d7eb" stroke="#a0d7eb" stroke-width="2" stroke-linejoin="round"/><path d="M488.8 642.1 L504.4 629.3 L518.7 630.8 L537.1 653.5 L592.6 679.1 L604.0 701.9 L608.2 731.7 L554.2 760.2 L504.4 733.1 L495.9 713.2 L497.3 687.6Z" fill="#a0d7eb" stroke="#a0d7eb" stroke-width="3" stroke-linejoin="round"/><path d="M605.4 852.6 L612.5 845.5 L623.9 843.5 L635.3 849.7 L636.7 852.6Z" fill="#a0d7eb"/><path d="M0.0 381.5 L476.0 179.0 L873.0 0.0 L925.4 0.0 L476.0 204.0 L0.0 408.3Z" fill="#8fa4c0" stroke="#7d94b6" stroke-width="1"/><path d="M0.0 421.0 L476.0 216.5 L957.5 1.0 L957.5 24.4 L476.0 236.0 L0.0 450.0Z" fill="#8fa4c0" stroke="#7d94b6" stroke-width="1"/><path d="M0.0 443.0 L366.0 281.0 L856.0 61.0" fill="none" stroke="#7d94b6" stroke-width="1" opacity=".7"/><path d="M957.5 568.2 L817.3 637.9 L675.0 710.4 L501.6 795.7 L476.0 804.2 L422.5 829.8 L365.7 844.0 L306.0 852.0 L394.0 852.0 L476.0 822.0 L504.4 810.0 L675.0 726.0 L817.3 653.5 L957.5 585.3Z" fill="#8fa4c0" stroke="#7d94b6" stroke-width="1"/></svg>
<div class="b" style="left:355px;top:711px;width:114px;height:22px;background:rgba(70,160,200,.85);border-radius:3px;box-shadow:0 1px 3px rgba(0,0,0,.35);"></div>
<div class="t" style="top:712.0px;font-size:16px;line-height:21px;color:#1e1e1e;letter-spacing:0.25px;-webkit-text-stroke:0.45px #1e1e1e;left:412.0px;transform:translateX(-50%);">2 Hrs 00 Mins</div>
<svg class="b" style="left:396.0px;top:742px;filter:drop-shadow(0 2px 2px rgba(0,0,0,.3));" width="28" height="32" viewBox="0 0 28 32"><path d="M14 0.500C6.500 0.500 0.500 6.400 0.500 13.700C0.500 21.500 8.500 27.500 14 31.700C19.500 27.500 27.500 21.500 27.500 13.700C27.500 6.400 21.500 0.500 14 0.500Z" fill="#0a96d4"/><circle cx="14" cy="13.400" r="5.400" fill="#fff"/></svg>
<div class="t" style="top:789.7px;font-size:17px;line-height:22px;color:#1e1e1e;letter-spacing:0.36px;-webkit-text-stroke:0.4px #1e1e1e;left:412.0px;transform:translateX(-50%);text-shadow:0 0 2px #f5f5f5,0 0 2px #f5f5f5;">Metropolitan Homes</div>
<div class="b" style="left:1167px;top:859px;width:114px;height:22px;background:#ffffff;border-radius:3px;box-shadow:0 1px 3px rgba(0,0,0,.35);"></div>
<div class="t" style="top:860.0px;font-size:16px;line-height:21px;color:#1e1e1e;letter-spacing:0.25px;-webkit-text-stroke:0.45px #1e1e1e;left:1224.0px;transform:translateX(-50%);">2 Hrs 55 Mins</div>
<svg class="b" style="left:1208.75px;top:888.7px;filter:drop-shadow(0 2px 2px rgba(0,0,0,.25));" width="30.5" height="34.8" viewBox="0 0 28 32"><path d="M14 1.200C7 1.200 1.300 6.700 1.300 13.700C1.300 21 8.800 26.800 14 30.800C19.200 26.800 26.700 21 26.700 13.700C26.700 6.700 21 1.200 14 1.200Z" fill="#fff" stroke="#555" stroke-width="1.9"/><circle cx="14" cy="13.200" r="5.0" fill="#e0e0e0" stroke="#555" stroke-width="1.9"/></svg>
<div class="t" style="top:928.2px;font-size:17px;line-height:22px;color:#1e1e1e;letter-spacing:0.04px;-webkit-text-stroke:0.4px #1e1e1e;left:1219.0px;transform:translateX(-50%);text-shadow:0 0 2px #f5f5f5,0 0 2px #f5f5f5;">Sunset Terrace</div>
<div class="b" style="left:943px;top:945.5px;width:114px;height:22px;background:rgba(184,104,206,.85);border-radius:3px;box-shadow:0 1px 3px rgba(0,0,0,.35);"></div>
<div class="t" style="top:946.5px;font-size:16px;line-height:21px;color:#1e1e1e;letter-spacing:0.25px;-webkit-text-stroke:0.45px #1e1e1e;left:1000.0px;transform:translateX(-50%);">2 Hrs 05 Mins</div>
<svg class="b" style="left:984.0px;top:976px;filter:drop-shadow(0 2px 2px rgba(0,0,0,.3));" width="28" height="32" viewBox="0 0 28 32"><path d="M14 0.500C6.500 0.500 0.500 6.400 0.500 13.700C0.500 21.500 8.500 27.500 14 31.700C19.500 27.500 27.500 21.500 27.500 13.700C27.500 6.400 21.500 0.500 14 0.500Z" fill="#a62bc8"/><circle cx="14" cy="13.400" r="5.400" fill="#fff"/></svg>
<div class="t" style="top:1023.7px;font-size:17px;line-height:22px;color:#1e1e1e;letter-spacing:-0.02px;-webkit-text-stroke:0.4px #1e1e1e;left:954.2px;transform:translateX(-50%);text-shadow:0 0 2px #f5f5f5,0 0 2px #f5f5f5;">Ritzy Retreat</div>
<div class="b" style="left:1105px;top:985px;width:114px;height:22px;background:rgba(92,190,150,.88);border-radius:3px;box-shadow:0 1px 3px rgba(0,0,0,.35);"></div>
<div class="t" style="top:986.0px;font-size:16px;line-height:21px;color:#1e1e1e;letter-spacing:0.25px;-webkit-text-stroke:0.45px #1e1e1e;left:1162.0px;transform:translateX(-50%);">1 Hrs 50 Mins</div>
<svg class="b" style="left:1146.0px;top:1016px;filter:drop-shadow(0 2px 2px rgba(0,0,0,.3));" width="28" height="32" viewBox="0 0 28 32"><path d="M14 0.500C6.500 0.500 0.500 6.400 0.500 13.700C0.500 21.500 8.500 27.500 14 31.700C19.500 27.500 27.500 21.500 27.500 13.700C27.500 6.400 21.500 0.500 14 0.500Z" fill="#14b86a"/><circle cx="14" cy="13.400" r="5.400" fill="#fff"/></svg>
<div class="t" style="top:1063.3px;font-size:17px;line-height:22px;color:#1e1e1e;letter-spacing:0.13px;-webkit-text-stroke:0.4px #1e1e1e;left:1167.8px;transform:translateX(-50%);text-shadow:0 0 2px #f5f5f5,0 0 2px #f5f5f5;">Princeton</div>
<div class="b" style="left:611px;top:1023px;width:114px;height:22px;background:rgba(226,176,100,.88);border-radius:3px;box-shadow:0 1px 3px rgba(0,0,0,.35);"></div>
<div class="t" style="top:1024.0px;font-size:16px;line-height:21px;color:#1e1e1e;letter-spacing:0.25px;-webkit-text-stroke:0.45px #1e1e1e;left:668.0px;transform:translateX(-50%);">2 Hrs 30 Mins</div>
<svg class="b" style="left:652.0px;top:1054px;filter:drop-shadow(0 2px 2px rgba(0,0,0,.3));" width="28" height="32" viewBox="0 0 28 32"><path d="M14 0.500C6.500 0.500 0.500 6.400 0.500 13.700C0.500 21.500 8.500 27.500 14 31.700C19.500 27.500 27.500 21.500 27.500 13.700C27.500 6.400 21.500 0.500 14 0.500Z" fill="#f0a22e"/><circle cx="14" cy="13.400" r="5.400" fill="#fff"/></svg>
<div class="t" style="top:1095.4px;font-size:17px;line-height:22px;color:#1e1e1e;letter-spacing:-0.18px;-webkit-text-stroke:0.4px #1e1e1e;left:668.0px;transform:translateX(-50%);text-shadow:0 0 2px #f5f5f5,0 0 2px #f5f5f5;">Elite Enclave</div>
<div class="b" style="left:963px;top:1095px;width:114px;height:22px;background:#ffffff;border-radius:3px;box-shadow:0 1px 3px rgba(0,0,0,.35);"></div>
<div class="t" style="top:1096.0px;font-size:16px;line-height:21px;color:#1e1e1e;letter-spacing:0.25px;-webkit-text-stroke:0.45px #1e1e1e;left:1020.0px;transform:translateX(-50%);">5 Hrs 30 Mins</div>
<svg class="b" style="left:1002.55px;top:1124.8px;filter:drop-shadow(0 2px 2px rgba(0,0,0,.25));" width="30.5" height="34.8" viewBox="0 0 28 32"><path d="M14 1.200C7 1.200 1.300 6.700 1.300 13.700C1.300 21 8.800 26.800 14 30.800C19.200 26.800 26.700 21 26.700 13.700C26.700 6.700 21 1.200 14 1.200Z" fill="#fff" stroke="#555" stroke-width="1.9"/><circle cx="14" cy="13.200" r="5.0" fill="#e0e0e0" stroke="#555" stroke-width="1.9"/></svg>
<div class="t" style="top:1162.0px;font-size:17px;line-height:22px;color:#1e1e1e;letter-spacing:0.07px;-webkit-text-stroke:0.4px #1e1e1e;left:1020.0px;transform:translateX(-50%);text-shadow:0 0 2px #f5f5f5,0 0 2px #f5f5f5;">Astra Heights</div>
<div class="b" style="left:1155px;top:1155px;width:114px;height:22px;background:#ffffff;border-radius:3px;box-shadow:0 1px 3px rgba(0,0,0,.35);"></div>
<div class="t" style="top:1156.0px;font-size:16px;line-height:21px;color:#1e1e1e;letter-spacing:0.25px;-webkit-text-stroke:0.45px #1e1e1e;left:1212.0px;transform:translateX(-50%);">1 Hrs 50 Mins</div>
<svg class="b" style="left:1194.75px;top:1184.7px;filter:drop-shadow(0 2px 2px rgba(0,0,0,.25));" width="30.5" height="34.8" viewBox="0 0 28 32"><path d="M14 1.200C7 1.200 1.300 6.700 1.300 13.700C1.300 21 8.800 26.800 14 30.800C19.200 26.800 26.700 21 26.700 13.700C26.700 6.700 21 1.200 14 1.200Z" fill="#fff" stroke="#555" stroke-width="1.9"/><circle cx="14" cy="13.200" r="5.0" fill="#e0e0e0" stroke="#555" stroke-width="1.9"/></svg>
<div class="t" style="top:1220.2px;font-size:17px;line-height:22px;color:#1e1e1e;letter-spacing:0.12px;-webkit-text-stroke:0.4px #1e1e1e;left:1205.2px;transform:translateX(-50%);text-shadow:0 0 2px #f5f5f5,0 0 2px #f5f5f5;">Bridgevalley</div>
<div class="b" style="left:331px;top:1203px;width:114px;height:22px;background:rgba(70,160,200,.85);border-radius:3px;box-shadow:0 1px 3px rgba(0,0,0,.35);"></div>
<div class="t" style="top:1204.0px;font-size:16px;line-height:21px;color:#1e1e1e;letter-spacing:0.25px;-webkit-text-stroke:0.45px #1e1e1e;left:388.0px;transform:translateX(-50%);">2 Hrs 00 Mins</div>
<svg class="b" style="left:372.0px;top:1234px;filter:drop-shadow(0 2px 2px rgba(0,0,0,.3));" width="28" height="32" viewBox="0 0 28 32"><path d="M14 0.500C6.500 0.500 0.500 6.400 0.500 13.700C0.500 21.500 8.500 27.500 14 31.700C19.500 27.500 27.500 21.500 27.500 13.700C27.500 6.400 21.500 0.500 14 0.500Z" fill="#0a96d4"/><circle cx="14" cy="13.400" r="5.400" fill="#fff"/></svg>
<div class="t" style="top:1280.0px;font-size:17px;line-height:22px;color:#1e1e1e;letter-spacing:0.13px;-webkit-text-stroke:0.4px #1e1e1e;left:389.2px;transform:translateX(-50%);text-shadow:0 0 2px #f5f5f5,0 0 2px #f5f5f5;">Gardenview</div>
<div class="b" style="left:573px;top:1423px;width:114px;height:22px;background:rgba(226,176,100,.88);border-radius:3px;box-shadow:0 1px 3px rgba(0,0,0,.35);"></div>
<div class="t" style="top:1424.0px;font-size:16px;line-height:21px;color:#1e1e1e;letter-spacing:0.25px;-webkit-text-stroke:0.45px #1e1e1e;left:630.0px;transform:translateX(-50%);">2 Hrs 55 Mins</div>
<svg class="b" style="left:614.0px;top:1454px;filter:drop-shadow(0 2px 2px rgba(0,0,0,.3));" width="28" height="32" viewBox="0 0 28 32"><path d="M14 0.500C6.500 0.500 0.500 6.400 0.500 13.700C0.500 21.500 8.500 27.500 14 31.700C19.500 27.500 27.500 21.500 27.500 13.700C27.500 6.400 21.500 0.500 14 0.500Z" fill="#f0a22e"/><circle cx="14" cy="13.400" r="5.400" fill="#fff"/></svg>
<div class="t" style="top:1485.5px;font-size:17px;line-height:22px;color:#1e1e1e;letter-spacing:-0.22px;-webkit-text-stroke:0.4px #1e1e1e;left:615.7px;transform:translateX(-50%);text-shadow:0 0 2px #f5f5f5,0 0 2px #f5f5f5;">Cityscape</div>
<div class="b" style="left:1003px;top:1397px;width:114px;height:22px;background:rgba(92,190,150,.88);border-radius:3px;box-shadow:0 1px 3px rgba(0,0,0,.35);"></div>
<div class="t" style="top:1398.0px;font-size:16px;line-height:21px;color:#1e1e1e;letter-spacing:0.25px;-webkit-text-stroke:0.45px #1e1e1e;left:1060.0px;transform:translateX(-50%);">2 Hrs 55 Mins</div>
<svg class="b" style="left:1044.0px;top:1428px;filter:drop-shadow(0 2px 2px rgba(0,0,0,.3));" width="28" height="32" viewBox="0 0 28 32"><path d="M14 0.500C6.500 0.500 0.500 6.400 0.500 13.700C0.500 21.500 8.500 27.500 14 31.700C19.500 27.500 27.500 21.500 27.500 13.700C27.500 6.400 21.500 0.500 14 0.500Z" fill="#14b86a"/><circle cx="14" cy="13.400" r="5.400" fill="#fff"/></svg>
<div class="t" style="top:1476.2px;font-size:17px;line-height:22px;color:#1e1e1e;letter-spacing:-0.26px;-webkit-text-stroke:0.4px #1e1e1e;left:1058.0px;transform:translateX(-50%);text-shadow:0 0 2px #f5f5f5,0 0 2px #f5f5f5;">Lakes View</div>
<div class="b" style="left:1186px;top:724px;width:56px;height:56px;background:#fff;border-radius:5px;box-shadow:0 1px 4px rgba(0,0,0,.25);"></div>
<svg class="b" style="left:1214px;top:738px;" width="32" height="28" viewBox="0 0 32 28"><path d="M4.500 10V3H11.500V10M4.500 19V25.500H12M21.500 25.500H28.500V19" fill="none" stroke="#555" stroke-width="2.800"/></svg>
<div class="b" style="left:1186px;top:1382px;width:56px;height:114px;background:#fff;border-radius:5px;box-shadow:0 1px 4px rgba(0,0,0,.25);"></div>
<svg class="b" style="left:1201px;top:1397px;" width="26" height="26" viewBox="0 0 26 26"><path d="M13 1V25M1 13H25" stroke="#555" stroke-width="3"/></svg>
<div class="b" style="left:1196px;top:1438.5px;width:36px;height:1.5px;background:#e2e2e2;"></div>
<svg class="b" style="left:1201px;top:1455px;" width="26" height="26" viewBox="0 0 26 26"><path d="M1 13H25" stroke="#555" stroke-width="3"/></svg>
<div class="b" style="left:1316px;top:668px;width:1460px;height:1032px;background:#f8f8f8;border-radius:0 0 10px 10px;"></div>
<div class="b" style="left:1336px;top:580px;width:1440px;height:88px;background:#f2f2f2;border-radius:0 10px 0 0;"></div>
<div class="b" style="left:1296px;top:580px;width:40px;height:88px;background:#57928f;border-radius:6px 0 0 6px;box-shadow:-2px 2px 8px rgba(0,0,0,.25);"></div>
<svg class="b" style="left:1304px;top:604px;" width="24" height="40" viewBox="0 0 24 40"><path d="M11.500 3.500L3.500 20L11.500 36.500M21 3.500L13 20L21 36.500" fill="none" stroke="#fff" stroke-width="2.400" stroke-linejoin="miter"/></svg>
<svg class="b" style="left:1356px;top:612px;" width="24" height="24" viewBox="0 0 24 24"><path d="M2.500 23.500V1.500A.8.800 0 0 1 3.300.700H13.200A.8.800 0 0 1 14 1.500V23.500M14 10.800H21.200A.8.800 0 0 1 22 11.600V23.500M0.300 23.500H23.700M6.500 23.500V18.500H10V23.500" fill="none" stroke="#005b58" stroke-width="1.400" stroke-linecap="round"/><rect x="4.8" y="3.5" width="2.400" height="2.600" rx=".5" fill="none" stroke="#005b58" stroke-width="1"/><rect x="9.6" y="3.5" width="2.400" height="2.600" rx=".5" fill="none" stroke="#005b58" stroke-width="1"/><rect x="4.8" y="8.5" width="2.400" height="2.600" rx=".5" fill="none" stroke="#005b58" stroke-width="1"/><rect x="9.6" y="8.5" width="2.400" height="2.600" rx=".5" fill="none" stroke="#005b58" stroke-width="1"/><rect x="4.8" y="13.5" width="2.400" height="2.600" rx=".5" fill="none" stroke="#005b58" stroke-width="1"/><rect x="9.6" y="13.5" width="2.400" height="2.600" rx=".5" fill="none" stroke="#005b58" stroke-width="1"/><rect x="16.500" y="13.5" width="2.400" height="2.800" rx=".5" fill="none" stroke="#005b58" stroke-width="1"/><rect x="16.500" y="18.5" width="2.400" height="2.800" rx=".5" fill="none" stroke="#005b58" stroke-width="1"/></svg>
<div class="t" style="top:609.7px;font-size:24px;line-height:31px;color:#1e1e1e;letter-spacing:1.03px;-webkit-text-stroke:0.6px #1e1e1e;left:1400.5px;">Community Name &amp; ID</div>
<div class="t" style="top:609.7px;font-size:24px;line-height:31px;color:#1e1e1e;letter-spacing:0.22px;-webkit-text-stroke:0.6px #1e1e1e;left:1776.0px;">Service Days</div>
<div class="t" style="top:594.2px;font-size:24px;line-height:31px;color:#1e1e1e;letter-spacing:0.03px;-webkit-text-stroke:0.6px #1e1e1e;left:2038.0px;"># of SVs</div>
<div class="t" style="top:594.2px;font-size:24px;line-height:31px;color:#1e1e1e;letter-spacing:0.28px;-webkit-text-stroke:0.6px #1e1e1e;left:2174.5px;">Service</div>
<div class="t" style="top:626.2px;font-size:24px;line-height:31px;color:#1e1e1e;letter-spacing:1.11px;-webkit-text-stroke:0.6px #1e1e1e;left:2174.5px;">Window</div>
<div class="t" style="top:594.2px;font-size:24px;line-height:31px;color:#1e1e1e;letter-spacing:0.99px;-webkit-text-stroke:0.6px #1e1e1e;left:2379.0px;">Budget</div>
<div class="t" style="top:626.2px;font-size:24px;line-height:31px;color:#1e1e1e;letter-spacing:0.44px;-webkit-text-stroke:0.6px #1e1e1e;left:2379.0px;">Hours (D)</div>
<div class="t" style="top:594.2px;font-size:24px;line-height:31px;color:#1e1e1e;letter-spacing:0.99px;-webkit-text-stroke:0.6px #1e1e1e;left:2516.5px;">Budget</div>
<div class="t" style="top:626.2px;font-size:24px;line-height:31px;color:#1e1e1e;letter-spacing:0.52px;-webkit-text-stroke:0.6px #1e1e1e;left:2516.5px;">Hours (W)</div>
<div class="t" style="top:609.7px;font-size:24px;line-height:31px;color:#1e1e1e;letter-spacing:0.76px;-webkit-text-stroke:0.6px #1e1e1e;left:2662.5px;">Actions</div>
<div class="b" style="left:1746px;top:600px;width:2px;height:48px;background:#d2d2d2;"></div>
<div class="b" style="left:2020px;top:600px;width:2px;height:48px;background:#d2d2d2;"></div>
<div class="b" style="left:2160px;top:600px;width:2px;height:48px;background:#d2d2d2;"></div>
<div class="b" style="left:2364px;top:600px;width:2px;height:48px;background:#d2d2d2;"></div>
<div class="b" style="left:2502.5px;top:600px;width:2px;height:48px;background:#d2d2d2;"></div>
<div class="b" style="left:2652px;top:600px;width:2px;height:48px;background:#d2d2d2;"></div>
<svg class="b" style="left:2038px;top:630px;" width="36" height="20" viewBox="0 0 34 19"><path d="M1 7.800H16V1.500C16 0.700 16.600 0.300 17.300 0.300H22C22.600 0.300 23 0.600 23.300 1.200L25.200 5.600H29.500C31 5.700 32 6.700 32.300 8.200L32.800 11.500L33.700 12.600C34.100 13.600 33.600 14.400 32.600 14.400H31.500A3.900 3.900 0 0 0 23.700 14.400H14.500V14.400H7.500V14.400H1.200C0.600 14.400 0.300 13.800 0.500 13.200Z" fill="#005b58"/><path d="M17.600 1.600H21.600L23.400 5.600H17.600Z" fill="#f2f2f2"/><path d="M19 1.600V5.600" stroke="#005b58" stroke-width="1"/><path d="M17.500 6.400H20" stroke="#f2f2f2" stroke-width=".8"/><circle cx="27.600" cy="14.900" r="2.100" fill="none" stroke="#005b58" stroke-width="1.500"/><path d="M8.200 14.600A2.900 2.900 0 0 0 14 14.600" fill="none" stroke="#005b58" stroke-width="1.300"/><path d="M1.600 6L0.300 10.500" stroke="#005b58" stroke-width="1" stroke-dasharray="1.600 1"/></svg>
<div class="b" style="left:2091px;top:628px;width:2px;height:23px;background:#d2d2d2;"></div>
<svg class="b" style="left:2112px;top:630px;" width="18" height="19.5" viewBox="0 0 20 22"><ellipse cx="10" cy="6" rx="5.200" ry="6" fill="#005b58"/><path d="M0.500 20.500C0.500 15.500 3.500 12.800 6.500 12.300C8.500 13.600 11.500 13.600 13.500 12.300C16.500 12.800 19.500 15.500 19.500 20.500C19.500 21.500 15 22 10 22C5 22 0.500 21.500 0.500 20.500Z" fill="#005b58"/></svg>
<div class="b" style="left:1336px;top:688px;width:1420px;height:88px;background:#fff;border:2px solid #d9d9d9;border-radius:8px;box-sizing:border-box;"></div>
<svg class="b" style="left:1355.0px;top:717px;" width="26" height="30" viewBox="0 0 28 32"><path d="M14 1.200C7 1.200 1.300 6.700 1.300 13.700C1.300 21 8.800 26.800 14 30.800C19.200 26.800 26.700 21 26.700 13.700C26.700 6.700 21 1.200 14 1.200Z" fill="none" stroke="#555" stroke-width="2"/><circle cx="14" cy="13.200" r="4.6" fill="none" stroke="#555" stroke-width="2"/></svg>
<div class="t" style="top:717.7px;font-size:24px;line-height:31px;color:#1e1e1e;letter-spacing:0.55px;-webkit-text-stroke:0.25px #1e1e1e;left:1400.5px;">Astra Heights - 102994</div>
<svg class="b" style="left:1670px;top:722.5px;" width="34" height="19" viewBox="0 0 34 19"><path d="M1 7.800H16V1.500C16 0.700 16.600 0.300 17.300 0.300H22C22.600 0.300 23 0.600 23.300 1.200L25.200 5.600H29.500C31 5.700 32 6.700 32.300 8.200L32.800 11.500L33.700 12.600C34.100 13.600 33.600 14.400 32.600 14.400H31.500A3.900 3.900 0 0 0 23.700 14.400H14.500V14.400H7.500V14.400H1.200C0.600 14.400 0.300 13.800 0.500 13.200Z" fill="#005b58"/><path d="M17.600 1.600H21.600L23.400 5.600H17.600Z" fill="#fff"/><path d="M19 1.600V5.600" stroke="#005b58" stroke-width="1"/><path d="M17.500 6.400H20" stroke="#fff" stroke-width=".8"/><circle cx="27.600" cy="14.900" r="2.100" fill="none" stroke="#005b58" stroke-width="1.500"/><path d="M8.200 14.600A2.900 2.900 0 0 0 14 14.600" fill="none" stroke="#005b58" stroke-width="1.300"/><path d="M1.600 6L0.300 10.500" stroke="#005b58" stroke-width="1" stroke-dasharray="1.600 1"/></svg>
<div class="b" style="left:1776px;top:712px;width:30px;height:40px;background:#e6f0cc;border-radius:6px 0 0 6px;"></div>
<div class="t" style="top:721.1px;font-size:19px;line-height:25px;color:#00443f;letter-spacing:0.00px;font-weight:700;left:1791.0px;transform:translateX(-50%);">S</div>
<div class="b" style="left:1808px;top:712px;width:30px;height:40px;background:#e6f0cc;"></div>
<div class="t" style="top:721.1px;font-size:19px;line-height:25px;color:#00443f;letter-spacing:0.00px;font-weight:700;left:1823.0px;transform:translateX(-50%);">M</div>
<div class="b" style="left:1840px;top:712px;width:30px;height:40px;background:#e6f0cc;"></div>
<div class="t" style="top:721.1px;font-size:19px;line-height:25px;color:#00443f;letter-spacing:0.00px;font-weight:700;left:1855.0px;transform:translateX(-50%);">T</div>
<div class="b" style="left:1872px;top:712px;width:30px;height:40px;background:#e6f0cc;"></div>
<div class="t" style="top:721.1px;font-size:19px;line-height:25px;color:#00443f;letter-spacing:0.00px;font-weight:700;left:1887.0px;transform:translateX(-50%);">W</div>
<div class="b" style="left:1904px;top:712px;width:30px;height:40px;background:#e6f0cc;"></div>
<div class="t" style="top:721.1px;font-size:19px;line-height:25px;color:#00443f;letter-spacing:0.00px;font-weight:700;left:1919.0px;transform:translateX(-50%);">T</div>
<div class="b" style="left:1936px;top:712px;width:30px;height:40px;background:#e6f0cc;"></div>
<div class="t" style="top:721.1px;font-size:19px;line-height:25px;color:#00443f;letter-spacing:0.00px;font-weight:700;left:1951.0px;transform:translateX(-50%);">F</div>
<div class="b" style="left:1968px;top:712px;width:30px;height:40px;background:#f0f1f3;border-radius:0 6px 6px 0;"></div>
<div class="t" style="top:721.1px;font-size:19px;line-height:25px;color:#b9b9b9;letter-spacing:0.00px;-webkit-text-stroke:0.5px #b9b9b9;left:1983.0px;transform:translateX(-50%);">S</div>
<div class="t" style="top:716.2px;font-size:24px;line-height:31px;color:#1e1e1e;letter-spacing:0.29px;left:2056.0px;transform:translateX(-50%);">-</div>
<div class="t" style="top:716.2px;font-size:24px;line-height:31px;color:#1e1e1e;letter-spacing:0.29px;left:2120.0px;transform:translateX(-50%);">-</div>
<div class="t" style="top:702.2px;font-size:24px;line-height:31px;color:#1e1e1e;letter-spacing:0.14px;left:2174.5px;">8:00 PM to</div>
<div class="t" style="top:734.2px;font-size:24px;line-height:31px;color:#1e1e1e;letter-spacing:-0.52px;left:2174.5px;">11:00 PM (EST)</div>
<div class="t" style="top:702.2px;font-size:24px;line-height:31px;color:#1e1e1e;letter-spacing:0.05px;left:2379.0px;">02 Hrs</div>
<div class="t" style="top:734.2px;font-size:24px;line-height:31px;color:#1e1e1e;letter-spacing:0.28px;left:2379.0px;">00 Mins</div>
<div class="t" style="top:702.2px;font-size:24px;line-height:31px;color:#1e1e1e;letter-spacing:0.05px;left:2516.5px;">12 Hrs</div>
<div class="t" style="top:734.2px;font-size:24px;line-height:31px;color:#1e1e1e;letter-spacing:0.28px;left:2516.5px;">00 Mins</div>
<div class="b" style="left:2652px;top:708px;width:2px;height:48px;background:#d6d6d6;"></div>
<svg class="b" style="left:2688px;top:714px;" width="36" height="36" viewBox="0 0 36 36"><g fill="none" stroke="#0a84c8" stroke-width="2.100" stroke-linecap="butt" stroke-linejoin="round"><path d="M20.78 33.76A16 16 0 1 1 33.52 21.87"/><path d="M17.200 9.500V18.200L20.500 22.200"/><path d="M27.600 21.500V33.700M21.500 27.600H33.700" stroke-linecap="butt"/></g></svg>
<div class="b" style="left:1336px;top:788px;width:1420px;height:88px;background:#fff;border:2px solid #d9d9d9;border-radius:8px;box-sizing:border-box;"></div>
<svg class="b" style="left:1355.0px;top:817px;" width="26" height="30" viewBox="0 0 28 32"><path d="M14 1.200C7 1.200 1.300 6.700 1.300 13.700C1.300 21 8.800 26.800 14 30.800C19.200 26.800 26.700 21 26.700 13.700C26.700 6.700 21 1.200 14 1.200Z" fill="none" stroke="#555" stroke-width="2"/><circle cx="14" cy="13.200" r="4.6" fill="none" stroke="#555" stroke-width="2"/></svg>
<div class="t" style="top:817.7px;font-size:24px;line-height:31px;color:#1e1e1e;letter-spacing:0.52px;-webkit-text-stroke:0.25px #1e1e1e;left:1400.5px;">Bridgevalley - 103418</div>
<svg class="b" style="left:1656px;top:822.5px;" width="34" height="19" viewBox="0 0 34 19"><path d="M1 7.800H16V1.500C16 0.700 16.600 0.300 17.300 0.300H22C22.600 0.300 23 0.600 23.300 1.200L25.200 5.600H29.500C31 5.700 32 6.700 32.300 8.200L32.800 11.500L33.700 12.600C34.100 13.600 33.600 14.400 32.600 14.400H31.500A3.900 3.900 0 0 0 23.700 14.400H14.500V14.400H7.500V14.400H1.200C0.600 14.400 0.300 13.800 0.500 13.200Z" fill="#005b58"/><path d="M17.600 1.600H21.600L23.400 5.600H17.600Z" fill="#fff"/><path d="M19 1.600V5.600" stroke="#005b58" stroke-width="1"/><path d="M17.500 6.400H20" stroke="#fff" stroke-width=".8"/><circle cx="27.600" cy="14.900" r="2.100" fill="none" stroke="#005b58" stroke-width="1.500"/><path d="M8.200 14.600A2.900 2.900 0 0 0 14 14.600" fill="none" stroke="#005b58" stroke-width="1.300"/><path d="M1.600 6L0.300 10.500" stroke="#005b58" stroke-width="1" stroke-dasharray="1.600 1"/></svg>
<div class="b" style="left:1776px;top:812px;width:30px;height:40px;background:#e6f0cc;border-radius:6px 0 0 6px;"></div>
<div class="t" style="top:821.1px;font-size:19px;line-height:25px;color:#00443f;letter-spacing:0.00px;font-weight:700;left:1791.0px;transform:translateX(-50%);">S</div>
<div class="b" style="left:1808px;top:812px;width:30px;height:40px;background:#e6f0cc;"></div>
<div class="t" style="top:821.1px;font-size:19px;line-height:25px;color:#00443f;letter-spacing:0.00px;font-weight:700;left:1823.0px;transform:translateX(-50%);">M</div>
<div class="b" style="left:1840px;top:812px;width:30px;height:40px;background:#e6f0cc;"></div>
<div class="t" style="top:821.1px;font-size:19px;line-height:25px;color:#00443f;letter-spacing:0.00px;font-weight:700;left:1855.0px;transform:translateX(-50%);">T</div>
<div class="b" style="left:1872px;top:812px;width:30px;height:40px;background:#e6f0cc;"></div>
<div class="t" style="top:821.1px;font-size:19px;line-height:25px;color:#00443f;letter-spacing:0.00px;font-weight:700;left:1887.0px;transform:translateX(-50%);">W</div>
<div class="b" style="left:1904px;top:812px;width:30px;height:40px;background:#e6f0cc;"></div>
<div class="t" style="top:821.1px;font-size:19px;line-height:25px;color:#00443f;letter-spacing:0.00px;font-weight:700;left:1919.0px;transform:translateX(-50%);">T</div>
<div class="b" style="left:1936px;top:812px;width:30px;height:40px;background:#e6f0cc;"></div>
<div class="t" style="top:821.1px;font-size:19px;line-height:25px;color:#00443f;letter-spacing:0.00px;font-weight:700;left:1951.0px;transform:translateX(-50%);">F</div>
<div class="b" style="left:1968px;top:812px;width:30px;height:40px;background:#f0f1f3;border-radius:0 6px 6px 0;"></div>
<div class="t" style="top:821.1px;font-size:19px;line-height:25px;color:#b9b9b9;letter-spacing:0.00px;-webkit-text-stroke:0.5px #b9b9b9;left:1983.0px;transform:translateX(-50%);">S</div>
<div class="t" style="top:816.2px;font-size:24px;line-height:31px;color:#1e1e1e;letter-spacing:0.29px;left:2056.0px;transform:translateX(-50%);">-</div>
<div class="t" style="top:816.2px;font-size:24px;line-height:31px;color:#1e1e1e;letter-spacing:0.29px;left:2120.0px;transform:translateX(-50%);">-</div>
<div class="t" style="top:802.2px;font-size:24px;line-height:31px;color:#1e1e1e;letter-spacing:0.14px;left:2174.5px;">8:00 PM to</div>
<div class="t" style="top:834.2px;font-size:24px;line-height:31px;color:#1e1e1e;letter-spacing:-0.52px;left:2174.5px;">11:00 PM (EST)</div>
<div class="t" style="top:802.2px;font-size:24px;line-height:31px;color:#1e1e1e;letter-spacing:0.05px;left:2379.0px;">01 Hrs</div>
<div class="t" style="top:834.2px;font-size:24px;line-height:31px;color:#1e1e1e;letter-spacing:0.28px;left:2379.0px;">50 Mins</div>
<div class="t" style="top:802.2px;font-size:24px;line-height:31px;color:#1e1e1e;letter-spacing:0.35px;left:2516.5px;">11 Hrs</div>
<div class="t" style="top:834.2px;font-size:24px;line-height:31px;color:#1e1e1e;letter-spacing:0.28px;left:2516.5px;">00 Mins</div>
<div class="b" style="left:2652px;top:808px;width:2px;height:48px;background:#d6d6d6;"></div>
<svg class="b" style="left:2688px;top:814px;" width="36" height="36" viewBox="0 0 36 36"><g fill="none" stroke="#0a84c8" stroke-width="2.100" stroke-linecap="butt" stroke-linejoin="round"><path d="M20.78 33.76A16 16 0 1 1 33.52 21.87"/><path d="M17.200 9.500V18.200L20.500 22.200"/><path d="M27.600 21.500V33.700M21.500 27.600H33.700" stroke-linecap="butt"/></g></svg>
<div class="b" style="left:1336px;top:888px;width:1420px;height:88px;background:#fff;border:2px solid #d9d9d9;border-radius:8px;box-sizing:border-box;"></div>
<svg class="b" style="left:1355.0px;top:917px;" width="26" height="30" viewBox="0 0 28 32"><path d="M14 1.200C7 1.200 1.300 6.700 1.300 13.700C1.300 21 8.800 26.800 14 30.800C19.200 26.800 26.700 21 26.700 13.700C26.700 6.700 21 1.200 14 1.200Z" fill="none" stroke="#555" stroke-width="2"/><circle cx="14" cy="13.200" r="4.6" fill="none" stroke="#555" stroke-width="2"/></svg>
<div class="t" style="top:917.7px;font-size:24px;line-height:31px;color:#1e1e1e;letter-spacing:0.53px;-webkit-text-stroke:0.25px #1e1e1e;left:1400.5px;">Sunset Terrace - 100053</div>
<div class="b" style="left:1776px;top:912px;width:30px;height:40px;background:#e6f0cc;border-radius:6px 0 0 6px;"></div>
<div class="t" style="top:921.1px;font-size:19px;line-height:25px;color:#00443f;letter-spacing:0.00px;font-weight:700;left:1791.0px;transform:translateX(-50%);">S</div>
<div class="b" style="left:1808px;top:912px;width:30px;height:40px;background:#e6f0cc;"></div>
<div class="t" style="top:921.1px;font-size:19px;line-height:25px;color:#00443f;letter-spacing:0.00px;font-weight:700;left:1823.0px;transform:translateX(-50%);">M</div>
<div class="b" style="left:1840px;top:912px;width:30px;height:40px;background:#e6f0cc;"></div>
<div class="t" style="top:921.1px;font-size:19px;line-height:25px;color:#00443f;letter-spacing:0.00px;font-weight:700;left:1855.0px;transform:translateX(-50%);">T</div>
<div class="b" style="left:1872px;top:912px;width:30px;height:40px;background:#e6f0cc;"></div>
<div class="t" style="top:921.1px;font-size:19px;line-height:25px;color:#00443f;letter-spacing:0.00px;font-weight:700;left:1887.0px;transform:translateX(-50%);">W</div>
<div class="b" style="left:1904px;top:912px;width:30px;height:40px;background:#e6f0cc;"></div>
<div class="t" style="top:921.1px;font-size:19px;line-height:25px;color:#00443f;letter-spacing:0.00px;font-weight:700;left:1919.0px;transform:translateX(-50%);">T</div>
<div class="b" style="left:1936px;top:912px;width:30px;height:40px;background:#f0f1f3;"></div>
<div class="t" style="top:921.1px;font-size:19px;line-height:25px;color:#b9b9b9;letter-spacing:0.00px;-webkit-text-stroke:0.5px #b9b9b9;left:1951.0px;transform:translateX(-50%);">F</div>
<div class="b" style="left:1968px;top:912px;width:30px;height:40px;background:#f0f1f3;border-radius:0 6px 6px 0;"></div>
<div class="t" style="top:921.1px;font-size:19px;line-height:25px;color:#b9b9b9;letter-spacing:0.00px;-webkit-text-stroke:0.5px #b9b9b9;left:1983.0px;transform:translateX(-50%);">S</div>
<div class="t" style="top:916.2px;font-size:24px;line-height:31px;color:#1e1e1e;letter-spacing:0.29px;left:2056.0px;transform:translateX(-50%);">-</div>
<div class="t" style="top:916.2px;font-size:24px;line-height:31px;color:#1e1e1e;letter-spacing:0.29px;left:2120.0px;transform:translateX(-50%);">-</div>
<div class="t" style="top:902.2px;font-size:24px;line-height:31px;color:#1e1e1e;letter-spacing:0.33px;left:2174.5px;">8:00 AM to</div>
<div class="t" style="top:934.2px;font-size:24px;line-height:31px;color:#1e1e1e;letter-spacing:-0.38px;left:2174.5px;">11:00 AM (EST)</div>
<div class="t" style="top:902.2px;font-size:24px;line-height:31px;color:#1e1e1e;letter-spacing:0.05px;left:2379.0px;">02 Hrs</div>
<div class="t" style="top:934.2px;font-size:24px;line-height:31px;color:#1e1e1e;letter-spacing:0.28px;left:2379.0px;">55 Mins</div>
<div class="t" style="top:902.2px;font-size:24px;line-height:31px;color:#1e1e1e;letter-spacing:0.05px;left:2516.5px;">14 Hrs</div>
<div class="t" style="top:934.2px;font-size:24px;line-height:31px;color:#1e1e1e;letter-spacing:0.28px;left:2516.5px;">35 Mins</div>
<div class="b" style="left:2652px;top:908px;width:2px;height:48px;background:#d6d6d6;"></div>
<svg class="b" style="left:2688px;top:914px;" width="36" height="36" viewBox="0 0 36 36"><g fill="none" stroke="#0a84c8" stroke-width="2.100" stroke-linecap="butt" stroke-linejoin="round"><path d="M20.78 33.76A16 16 0 1 1 33.52 21.87"/><path d="M17.200 9.500V18.200L20.500 22.200"/><path d="M27.600 21.500V33.700M21.500 27.600H33.700" stroke-linecap="butt"/></g></svg>
<div class="b" style="left:1336px;top:988px;width:1420px;height:176px;background:#fcf4eb;border:2px solid #e9cba4;border-radius:8px;box-sizing:border-box;"></div>
<div class="b" style="left:1336px;top:988px;width:4.5px;height:176px;background:#f0a22e;border-radius:8px 0 0 8px;"></div>
<svg class="b" style="left:1355.75px;top:1017.5px;" width="24.5" height="28.5" viewBox="0 0 28 32"><path d="M14 0.500C6.500 0.500 0.500 6.400 0.500 13.700C0.500 21.500 8.500 27.500 14 31.700C19.500 27.500 27.500 21.500 27.500 13.700C27.500 6.400 21.500 0.500 14 0.500Z" fill="#f0a22e"/><circle cx="14" cy="13.400" r="5.400" fill="#fcf4eb"/></svg>
<svg class="b" style="left:1355.75px;top:1105.5px;" width="24.5" height="28.5" viewBox="0 0 28 32"><path d="M14 0.500C6.500 0.500 0.500 6.400 0.500 13.700C0.500 21.500 8.500 27.500 14 31.700C19.500 27.500 27.500 21.500 27.500 13.700C27.500 6.400 21.500 0.500 14 0.500Z" fill="#f0a22e"/><circle cx="14" cy="13.400" r="5.400" fill="#fcf4eb"/></svg>
<svg class="b" style="left:1365px;top:1049px;" width="6" height="54" viewBox="0 0 6 54"><path d="M3 2V52" stroke="#f0a22e" stroke-width="3.600" stroke-linecap="round" stroke-dasharray="0.1 7"/></svg>
<div class="t" style="top:998.7px;font-size:19px;line-height:25px;color:#1e1e1e;letter-spacing:0.34px;-webkit-text-stroke:0.3px #1e1e1e;left:1400.5px;">Night Shift</div>
<div class="t" style="top:1029.5px;font-size:24px;line-height:31px;color:#1e1e1e;letter-spacing:0.24px;-webkit-text-stroke:0.25px #1e1e1e;left:1400.5px;">Elite Enclave - 102972</div>
<svg class="b" style="left:1660px;top:1035px;" width="34" height="19" viewBox="0 0 34 19"><path d="M1 7.800H16V1.500C16 0.700 16.600 0.300 17.300 0.300H22C22.600 0.300 23 0.600 23.300 1.200L25.200 5.600H29.500C31 5.700 32 6.700 32.300 8.200L32.800 11.500L33.700 12.600C34.100 13.600 33.600 14.400 32.600 14.400H31.500A3.900 3.900 0 0 0 23.700 14.400H14.500V14.400H7.500V14.400H1.200C0.600 14.400 0.300 13.800 0.500 13.200Z" fill="#005b58"/><path d="M17.600 1.600H21.600L23.400 5.600H17.600Z" fill="#fcf4eb"/><path d="M19 1.600V5.600" stroke="#005b58" stroke-width="1"/><path d="M17.500 6.400H20" stroke="#fcf4eb" stroke-width=".8"/><circle cx="27.600" cy="14.900" r="2.100" fill="none" stroke="#005b58" stroke-width="1.500"/><path d="M8.200 14.600A2.900 2.900 0 0 0 14 14.600" fill="none" stroke="#005b58" stroke-width="1.300"/><path d="M1.600 6L0.300 10.500" stroke="#005b58" stroke-width="1" stroke-dasharray="1.600 1"/></svg>
<div class="t" style="top:1106.0px;font-size:24px;line-height:31px;color:#1e1e1e;letter-spacing:0.31px;-webkit-text-stroke:0.25px #1e1e1e;left:1400.5px;">Cityscape - 100411</div>
<div class="b" style="left:1776px;top:1012px;width:30px;height:40px;background:#f0f1f3;border-radius:6px 0 0 6px;"></div>
<div class="t" style="top:1021.1px;font-size:19px;line-height:25px;color:#b9b9b9;letter-spacing:0.00px;-webkit-text-stroke:0.5px #b9b9b9;left:1791.0px;transform:translateX(-50%);">S</div>
<div class="b" style="left:1808px;top:1012px;width:30px;height:40px;background:#f0f1f3;"></div>
<div class="t" style="top:1021.1px;font-size:19px;line-height:25px;color:#b9b9b9;letter-spacing:0.00px;-webkit-text-stroke:0.5px #b9b9b9;left:1823.0px;transform:translateX(-50%);">M</div>
<div class="b" style="left:1840px;top:1012px;width:30px;height:40px;background:#e6f0cc;"></div>
<div class="t" style="top:1021.1px;font-size:19px;line-height:25px;color:#00443f;letter-spacing:0.00px;font-weight:700;left:1855.0px;transform:translateX(-50%);">T</div>
<div class="b" style="left:1872px;top:1012px;width:30px;height:40px;background:#f0f1f3;"></div>
<div class="t" style="top:1021.1px;font-size:19px;line-height:25px;color:#b9b9b9;letter-spacing:0.00px;-webkit-text-stroke:0.5px #b9b9b9;left:1887.0px;transform:translateX(-50%);">W</div>
<div class="b" style="left:1904px;top:1012px;width:30px;height:40px;background:#e6f0cc;"></div>
<div class="t" style="top:1021.1px;font-size:19px;line-height:25px;color:#00443f;letter-spacing:0.00px;font-weight:700;left:1919.0px;transform:translateX(-50%);">T</div>
<div class="b" style="left:1936px;top:1012px;width:30px;height:40px;background:#f0f1f3;"></div>
<div class="t" style="top:1021.1px;font-size:19px;line-height:25px;color:#b9b9b9;letter-spacing:0.00px;-webkit-text-stroke:0.5px #b9b9b9;left:1951.0px;transform:translateX(-50%);">F</div>
<div class="b" style="left:1968px;top:1012px;width:30px;height:40px;background:#f0f1f3;border-radius:0 6px 6px 0;"></div>
<div class="t" style="top:1021.1px;font-size:19px;line-height:25px;color:#b9b9b9;letter-spacing:0.00px;-webkit-text-stroke:0.5px #b9b9b9;left:1983.0px;transform:translateX(-50%);">S</div>
<div class="b" style="left:1776px;top:1100px;width:30px;height:40px;background:#e6f0cc;border-radius:6px 0 0 6px;"></div>
<div class="t" style="top:1109.1px;font-size:19px;line-height:25px;color:#00443f;letter-spacing:0.00px;font-weight:700;left:1791.0px;transform:translateX(-50%);">S</div>
<div class="b" style="left:1808px;top:1100px;width:30px;height:40px;background:#e6f0cc;"></div>
<div class="t" style="top:1109.1px;font-size:19px;line-height:25px;color:#00443f;letter-spacing:0.00px;font-weight:700;left:1823.0px;transform:translateX(-50%);">M</div>
<div class="b" style="left:1840px;top:1100px;width:30px;height:40px;background:#e6f0cc;"></div>
<div class="t" style="top:1109.1px;font-size:19px;line-height:25px;color:#00443f;letter-spacing:0.00px;font-weight:700;left:1855.0px;transform:translateX(-50%);">T</div>
<div class="b" style="left:1872px;top:1100px;width:30px;height:40px;background:#e6f0cc;"></div>
<div class="t" style="top:1109.1px;font-size:19px;line-height:25px;color:#00443f;letter-spacing:0.00px;font-weight:700;left:1887.0px;transform:translateX(-50%);">W</div>
<div class="b" style="left:1904px;top:1100px;width:30px;height:40px;background:#e6f0cc;"></div>
<div class="t" style="top:1109.1px;font-size:19px;line-height:25px;color:#00443f;letter-spacing:0.00px;font-weight:700;left:1919.0px;transform:translateX(-50%);">T</div>
<div class="b" style="left:1936px;top:1100px;width:30px;height:40px;background:#f0f1f3;"></div>
<div class="t" style="top:1109.1px;font-size:19px;line-height:25px;color:#b9b9b9;letter-spacing:0.00px;-webkit-text-stroke:0.5px #b9b9b9;left:1951.0px;transform:translateX(-50%);">F</div>
<div class="b" style="left:1968px;top:1100px;width:30px;height:40px;background:#f0f1f3;border-radius:0 6px 6px 0;"></div>
<div class="t" style="top:1109.1px;font-size:19px;line-height:25px;color:#b9b9b9;letter-spacing:0.00px;-webkit-text-stroke:0.5px #b9b9b9;left:1983.0px;transform:translateX(-50%);">S</div>
<div class="b" style="left:2036px;top:1012px;width:40px;height:40px;background:#f7ecdb;border-radius:20px;"></div><div class="t" style="top:1016.8px;font-size:24px;line-height:31px;color:#1e1e1e;letter-spacing:0.29px;-webkit-text-stroke:0.3px #1e1e1e;left:2056.0px;transform:translateX(-50%);">1</div>
<div class="b" style="left:2100px;top:1012px;width:40px;height:40px;background:#f7ecdb;border-radius:20px;"></div><div class="t" style="top:1016.8px;font-size:24px;line-height:31px;color:#1e1e1e;letter-spacing:0.29px;-webkit-text-stroke:0.3px #1e1e1e;left:2120.0px;transform:translateX(-50%);">1</div>
<div class="t" style="top:1002.2px;font-size:24px;line-height:31px;color:#1e1e1e;letter-spacing:0.14px;left:2174.5px;">8:00 PM to</div>
<div class="t" style="top:1034.2px;font-size:24px;line-height:31px;color:#1e1e1e;letter-spacing:-0.52px;left:2174.5px;">11:00 PM (EST)</div>
<div class="t" style="top:1002.2px;font-size:24px;line-height:31px;color:#1e1e1e;letter-spacing:0.05px;left:2379.0px;">02 Hrs</div>
<div class="t" style="top:1034.2px;font-size:24px;line-height:31px;color:#1e1e1e;letter-spacing:0.28px;left:2379.0px;">30 Mins</div>
<div class="t" style="top:1002.2px;font-size:24px;line-height:31px;color:#1e1e1e;letter-spacing:0.05px;left:2516.5px;">05 Hrs</div>
<div class="t" style="top:1034.2px;font-size:24px;line-height:31px;color:#1e1e1e;letter-spacing:0.28px;left:2516.5px;">00 Mins</div>
<div class="t" style="top:1090.2px;font-size:24px;line-height:31px;color:#1e1e1e;letter-spacing:0.14px;left:2174.5px;">8:00 PM to</div>
<div class="t" style="top:1122.2px;font-size:24px;line-height:31px;color:#1e1e1e;letter-spacing:-0.52px;left:2174.5px;">11:00 PM (EST)</div>
<div class="t" style="top:1090.2px;font-size:24px;line-height:31px;color:#1e1e1e;letter-spacing:0.05px;left:2379.0px;">02 Hrs</div>
<div class="t" style="top:1122.2px;font-size:24px;line-height:31px;color:#1e1e1e;letter-spacing:0.28px;left:2379.0px;">55 Mins</div>
<div class="t" style="top:1090.2px;font-size:24px;line-height:31px;color:#1e1e1e;letter-spacing:0.05px;left:2516.5px;">14 Hrs</div>
<div class="t" style="top:1122.2px;font-size:24px;line-height:31px;color:#1e1e1e;letter-spacing:0.28px;left:2516.5px;">35 Mins</div>
<div class="b" style="left:2652px;top:1008px;width:2px;height:136px;background:#d6d6d6;"></div>
<svg class="b" style="left:2691px;top:1061px;" width="30" height="30" viewBox="0 0 30 30"><g fill="none" stroke="#0a84c8" stroke-width="2.100" stroke-linejoin="round" stroke-linecap="round"><path d="M1.700 19.500L19.500 2.700A6.200 6.200 0 0 1 28 11.600L10.400 28.200C7.500 27.500 2.800 23.500 1.700 19.500Z"/><path d="M1.700 19.500L0.900 29.300L7 28"/><path d="M6.700 23.300L22.200 8.500"/><path d="M20.300 3.500L27.200 10.400"/></g></svg>
<div class="b" style="left:1336px;top:1176px;width:1420px;height:88px;background:#f9edfb;border:2px solid #e5b9ee;border-radius:8px;box-sizing:border-box;"></div>
<div class="b" style="left:1336px;top:1176px;width:4.5px;height:88px;background:#b02cc8;border-radius:8px 0 0 8px;"></div>
<svg class="b" style="left:1355.75px;top:1206px;" width="24.5" height="28.5" viewBox="0 0 28 32"><path d="M14 0.500C6.500 0.500 0.500 6.400 0.500 13.700C0.500 21.500 8.500 27.500 14 31.700C19.500 27.500 27.500 21.500 27.500 13.700C27.500 6.400 21.500 0.500 14 0.500Z" fill="#a62bc8"/><circle cx="14" cy="13.400" r="5.400" fill="#f9edfb"/></svg>
<div class="t" style="top:1186.9px;font-size:19px;line-height:25px;color:#1e1e1e;letter-spacing:0.29px;-webkit-text-stroke:0.3px #1e1e1e;left:1400.5px;">Midday Shift</div>
<div class="t" style="top:1217.5px;font-size:24px;line-height:31px;color:#1e1e1e;letter-spacing:0.43px;-webkit-text-stroke:0.25px #1e1e1e;left:1400.5px;">Ritzy Retreat - 100928</div>
<svg class="b" style="left:1664px;top:1222.5px;" width="34" height="19" viewBox="0 0 34 19"><path d="M1 7.800H16V1.500C16 0.700 16.600 0.300 17.300 0.300H22C22.600 0.300 23 0.600 23.300 1.200L25.200 5.600H29.500C31 5.700 32 6.700 32.300 8.200L32.800 11.500L33.700 12.600C34.100 13.600 33.600 14.400 32.600 14.400H31.500A3.900 3.900 0 0 0 23.700 14.400H14.500V14.400H7.500V14.400H1.200C0.600 14.400 0.300 13.800 0.500 13.200Z" fill="#005b58"/><path d="M17.600 1.600H21.600L23.400 5.600H17.600Z" fill="#f9edfb"/><path d="M19 1.600V5.600" stroke="#005b58" stroke-width="1"/><path d="M17.500 6.400H20" stroke="#f9edfb" stroke-width=".8"/><circle cx="27.600" cy="14.900" r="2.100" fill="none" stroke="#005b58" stroke-width="1.500"/><path d="M8.200 14.600A2.900 2.900 0 0 0 14 14.600" fill="none" stroke="#005b58" stroke-width="1.300"/><path d="M1.600 6L0.300 10.500" stroke="#005b58" stroke-width="1" stroke-dasharray="1.600 1"/></svg>
<div class="b" style="left:1776px;top:1200px;width:30px;height:40px;background:#e6f0cc;border-radius:6px 0 0 6px;"></div>
<div class="t" style="top:1209.1px;font-size:19px;line-height:25px;color:#00443f;letter-spacing:0.00px;font-weight:700;left:1791.0px;transform:translateX(-50%);">S</div>
<div class="b" style="left:1808px;top:1200px;width:30px;height:40px;background:#e6f0cc;"></div>
<div class="t" style="top:1209.1px;font-size:19px;line-height:25px;color:#00443f;letter-spacing:0.00px;font-weight:700;left:1823.0px;transform:translateX(-50%);">M</div>
<div class="b" style="left:1840px;top:1200px;width:30px;height:40px;background:#e6f0cc;"></div>
<div class="t" style="top:1209.1px;font-size:19px;line-height:25px;color:#00443f;letter-spacing:0.00px;font-weight:700;left:1855.0px;transform:translateX(-50%);">T</div>
<div class="b" style="left:1872px;top:1200px;width:30px;height:40px;background:#e6f0cc;"></div>
<div class="t" style="top:1209.1px;font-size:19px;line-height:25px;color:#00443f;letter-spacing:0.00px;font-weight:700;left:1887.0px;transform:translateX(-50%);">W</div>
<div class="b" style="left:1904px;top:1200px;width:30px;height:40px;background:#e6f0cc;"></div>
<div class="t" style="top:1209.1px;font-size:19px;line-height:25px;color:#00443f;letter-spacing:0.00px;font-weight:700;left:1919.0px;transform:translateX(-50%);">T</div>
<div class="b" style="left:1936px;top:1200px;width:30px;height:40px;background:#f0f1f3;"></div>
<div class="t" style="top:1209.1px;font-size:19px;line-height:25px;color:#b9b9b9;letter-spacing:0.00px;-webkit-text-stroke:0.5px #b9b9b9;left:1951.0px;transform:translateX(-50%);">F</div>
<div class="b" style="left:1968px;top:1200px;width:30px;height:40px;background:#f0f1f3;border-radius:0 6px 6px 0;"></div>
<div class="t" style="top:1209.1px;font-size:19px;line-height:25px;color:#b9b9b9;letter-spacing:0.00px;-webkit-text-stroke:0.5px #b9b9b9;left:1983.0px;transform:translateX(-50%);">S</div>
<div class="b" style="left:2036px;top:1200px;width:40px;height:40px;background:#f0dcf4;border-radius:20px;"></div><div class="t" style="top:1204.8px;font-size:24px;line-height:31px;color:#1e1e1e;letter-spacing:0.29px;-webkit-text-stroke:0.3px #1e1e1e;left:2056.0px;transform:translateX(-50%);">1</div>
<div class="b" style="left:2100px;top:1200px;width:40px;height:40px;background:#f0dcf4;border-radius:20px;"></div><div class="t" style="top:1204.8px;font-size:24px;line-height:31px;color:#1e1e1e;letter-spacing:0.29px;-webkit-text-stroke:0.3px #1e1e1e;left:2120.0px;transform:translateX(-50%);">1</div>
<div class="t" style="top:1190.2px;font-size:24px;line-height:31px;color:#1e1e1e;letter-spacing:0.14px;left:2174.5px;">2:00 PM to</div>
<div class="t" style="top:1222.2px;font-size:24px;line-height:31px;color:#1e1e1e;letter-spacing:-0.75px;left:2174.5px;">4:05 PM (EST)</div>
<div class="t" style="top:1190.2px;font-size:24px;line-height:31px;color:#1e1e1e;letter-spacing:0.05px;left:2379.0px;">02 Hrs</div>
<div class="t" style="top:1222.2px;font-size:24px;line-height:31px;color:#1e1e1e;letter-spacing:0.28px;left:2379.0px;">00 Mins</div>
<div class="t" style="top:1190.2px;font-size:24px;line-height:31px;color:#1e1e1e;letter-spacing:0.05px;left:2516.5px;">10 Hrs</div>
<div class="t" style="top:1222.2px;font-size:24px;line-height:31px;color:#1e1e1e;letter-spacing:0.28px;left:2516.5px;">00 Mins</div>
<div class="b" style="left:2652px;top:1196px;width:2px;height:48px;background:#d6d6d6;"></div>
<svg class="b" style="left:2691px;top:1205px;" width="30" height="30" viewBox="0 0 30 30"><g fill="none" stroke="#0a84c8" stroke-width="2.100" stroke-linejoin="round" stroke-linecap="round"><path d="M1.700 19.500L19.500 2.700A6.200 6.200 0 0 1 28 11.600L10.400 28.200C7.500 27.500 2.800 23.500 1.700 19.500Z"/><path d="M1.700 19.500L0.900 29.300L7 28"/><path d="M6.700 23.300L22.200 8.500"/><path d="M20.300 3.500L27.200 10.400"/></g></svg>
<div class="b" style="left:1336px;top:1276px;width:1420px;height:176px;background:#ebf6fc;border:2px solid #a9d9ee;border-radius:8px;box-sizing:border-box;"></div>
<div class="b" style="left:1336px;top:1276px;width:4.5px;height:176px;background:#0a96d4;border-radius:8px 0 0 8px;"></div>
<svg class="b" style="left:1355.75px;top:1305.5px;" width="24.5" height="28.5" viewBox="0 0 28 32"><path d="M14 0.500C6.500 0.500 0.500 6.400 0.500 13.700C0.500 21.500 8.500 27.500 14 31.700C19.500 27.500 27.500 21.500 27.500 13.700C27.500 6.400 21.500 0.500 14 0.500Z" fill="#0a96d4"/><circle cx="14" cy="13.400" r="5.400" fill="#ebf6fc"/></svg>
<svg class="b" style="left:1355.75px;top:1393.5px;" width="24.5" height="28.5" viewBox="0 0 28 32"><path d="M14 0.500C6.500 0.500 0.500 6.400 0.500 13.700C0.500 21.500 8.500 27.500 14 31.700C19.500 27.500 27.500 21.500 27.500 13.700C27.500 6.400 21.500 0.500 14 0.500Z" fill="#0a96d4"/><circle cx="14" cy="13.400" r="5.400" fill="#ebf6fc"/></svg>
<svg class="b" style="left:1365px;top:1337px;" width="6" height="54" viewBox="0 0 6 54"><path d="M3 2V52" stroke="#0a96d4" stroke-width="3.600" stroke-linecap="round" stroke-dasharray="0.1 7"/></svg>
<div class="t" style="top:1286.7px;font-size:19px;line-height:25px;color:#1e1e1e;letter-spacing:0.34px;-webkit-text-stroke:0.3px #1e1e1e;left:1400.5px;">Night Shift</div>
<div class="t" style="top:1317.5px;font-size:24px;line-height:31px;color:#1e1e1e;letter-spacing:0.56px;-webkit-text-stroke:0.25px #1e1e1e;left:1400.5px;">Gardenview - 101734</div>
<svg class="b" style="left:1660px;top:1323px;" width="34" height="19" viewBox="0 0 34 19"><path d="M1 7.800H16V1.500C16 0.700 16.600 0.300 17.300 0.300H22C22.600 0.300 23 0.600 23.300 1.200L25.200 5.600H29.500C31 5.700 32 6.700 32.300 8.200L32.800 11.500L33.700 12.600C34.100 13.600 33.600 14.400 32.600 14.400H31.500A3.900 3.900 0 0 0 23.700 14.400H14.500V14.400H7.500V14.400H1.200C0.600 14.400 0.300 13.800 0.500 13.200Z" fill="#005b58"/><path d="M17.600 1.600H21.600L23.400 5.600H17.600Z" fill="#ebf6fc"/><path d="M19 1.600V5.600" stroke="#005b58" stroke-width="1"/><path d="M17.500 6.400H20" stroke="#ebf6fc" stroke-width=".8"/><circle cx="27.600" cy="14.900" r="2.100" fill="none" stroke="#005b58" stroke-width="1.500"/><path d="M8.200 14.600A2.900 2.900 0 0 0 14 14.600" fill="none" stroke="#005b58" stroke-width="1.300"/><path d="M1.600 6L0.300 10.500" stroke="#005b58" stroke-width="1" stroke-dasharray="1.600 1"/></svg>
<div class="t" style="top:1394.0px;font-size:24px;line-height:31px;color:#1e1e1e;letter-spacing:0.85px;-webkit-text-stroke:0.25px #1e1e1e;left:1400.5px;">Metropolitan Homes - 101...</div>
<div class="b" style="left:1776px;top:1300px;width:30px;height:40px;background:#e6f0cc;border-radius:6px 0 0 6px;"></div>
<div class="t" style="top:1309.1px;font-size:19px;line-height:25px;color:#00443f;letter-spacing:0.00px;font-weight:700;left:1791.0px;transform:translateX(-50%);">S</div>
<div class="b" style="left:1808px;top:1300px;width:30px;height:40px;background:#e6f0cc;"></div>
<div class="t" style="top:1309.1px;font-size:19px;line-height:25px;color:#00443f;letter-spacing:0.00px;font-weight:700;left:1823.0px;transform:translateX(-50%);">M</div>
<div class="b" style="left:1840px;top:1300px;width:30px;height:40px;background:#e6f0cc;"></div>
<div class="t" style="top:1309.1px;font-size:19px;line-height:25px;color:#00443f;letter-spacing:0.00px;font-weight:700;left:1855.0px;transform:translateX(-50%);">T</div>
<div class="b" style="left:1872px;top:1300px;width:30px;height:40px;background:#e6f0cc;"></div>
<div class="t" style="top:1309.1px;font-size:19px;line-height:25px;color:#00443f;letter-spacing:0.00px;font-weight:700;left:1887.0px;transform:translateX(-50%);">W</div>
<div class="b" style="left:1904px;top:1300px;width:30px;height:40px;background:#e6f0cc;"></div>
<div class="t" style="top:1309.1px;font-size:19px;line-height:25px;color:#00443f;letter-spacing:0.00px;font-weight:700;left:1919.0px;transform:translateX(-50%);">T</div>
<div class="b" style="left:1936px;top:1300px;width:30px;height:40px;background:#e6f0cc;"></div>
<div class="t" style="top:1309.1px;font-size:19px;line-height:25px;color:#00443f;letter-spacing:0.00px;font-weight:700;left:1951.0px;transform:translateX(-50%);">F</div>
<div class="b" style="left:1968px;top:1300px;width:30px;height:40px;background:#f0f1f3;border-radius:0 6px 6px 0;"></div>
<div class="t" style="top:1309.1px;font-size:19px;line-height:25px;color:#b9b9b9;letter-spacing:0.00px;-webkit-text-stroke:0.5px #b9b9b9;left:1983.0px;transform:translateX(-50%);">S</div>
<div class="b" style="left:1776px;top:1388px;width:30px;height:40px;background:#e6f0cc;border-radius:6px 0 0 6px;"></div>
<div class="t" style="top:1397.1px;font-size:19px;line-height:25px;color:#00443f;letter-spacing:0.00px;font-weight:700;left:1791.0px;transform:translateX(-50%);">S</div>
<div class="b" style="left:1808px;top:1388px;width:30px;height:40px;background:#e6f0cc;"></div>
<div class="t" style="top:1397.1px;font-size:19px;line-height:25px;color:#00443f;letter-spacing:0.00px;font-weight:700;left:1823.0px;transform:translateX(-50%);">M</div>
<div class="b" style="left:1840px;top:1388px;width:30px;height:40px;background:#e6f0cc;"></div>
<div class="t" style="top:1397.1px;font-size:19px;line-height:25px;color:#00443f;letter-spacing:0.00px;font-weight:700;left:1855.0px;transform:translateX(-50%);">T</div>
<div class="b" style="left:1872px;top:1388px;width:30px;height:40px;background:#e6f0cc;"></div>
<div class="t" style="top:1397.1px;font-size:19px;line-height:25px;color:#00443f;letter-spacing:0.00px;font-weight:700;left:1887.0px;transform:translateX(-50%);">W</div>
<div class="b" style="left:1904px;top:1388px;width:30px;height:40px;background:#e6f0cc;"></div>
<div class="t" style="top:1397.1px;font-size:19px;line-height:25px;color:#00443f;letter-spacing:0.00px;font-weight:700;left:1919.0px;transform:translateX(-50%);">T</div>
<div class="b" style="left:1936px;top:1388px;width:30px;height:40px;background:#e6f0cc;"></div>
<div class="t" style="top:1397.1px;font-size:19px;line-height:25px;color:#00443f;letter-spacing:0.00px;font-weight:700;left:1951.0px;transform:translateX(-50%);">F</div>
<div class="b" style="left:1968px;top:1388px;width:30px;height:40px;background:#f0f1f3;border-radius:0 6px 6px 0;"></div>
<div class="t" style="top:1397.1px;font-size:19px;line-height:25px;color:#b9b9b9;letter-spacing:0.00px;-webkit-text-stroke:0.5px #b9b9b9;left:1983.0px;transform:translateX(-50%);">S</div>
<div class="b" style="left:2036px;top:1300px;width:40px;height:40px;background:#d9eef7;border-radius:20px;"></div><div class="t" style="top:1304.8px;font-size:24px;line-height:31px;color:#1e1e1e;letter-spacing:0.29px;-webkit-text-stroke:0.3px #1e1e1e;left:2056.0px;transform:translateX(-50%);">1</div>
<div class="t" style="top:1304.2px;font-size:24px;line-height:31px;color:#1e1e1e;letter-spacing:0.29px;left:2120.0px;transform:translateX(-50%);">-</div>
<div class="t" style="top:1290.2px;font-size:24px;line-height:31px;color:#1e1e1e;letter-spacing:0.14px;left:2174.5px;">2:00 PM to</div>
<div class="t" style="top:1322.2px;font-size:24px;line-height:31px;color:#1e1e1e;letter-spacing:-0.75px;left:2174.5px;">4:00 PM (EST)</div>
<div class="t" style="top:1290.2px;font-size:24px;line-height:31px;color:#1e1e1e;letter-spacing:0.05px;left:2379.0px;">02 Hrs</div>
<div class="t" style="top:1322.2px;font-size:24px;line-height:31px;color:#1e1e1e;letter-spacing:0.28px;left:2379.0px;">00 Mins</div>
<div class="t" style="top:1290.2px;font-size:24px;line-height:31px;color:#1e1e1e;letter-spacing:0.05px;left:2516.5px;">12 Hrs</div>
<div class="t" style="top:1322.2px;font-size:24px;line-height:31px;color:#1e1e1e;letter-spacing:0.28px;left:2516.5px;">00 Mins</div>
<div class="t" style="top:1378.2px;font-size:24px;line-height:31px;color:#1e1e1e;letter-spacing:0.14px;left:2174.5px;">10:00 PM to</div>
<div class="t" style="top:1410.2px;font-size:24px;line-height:31px;color:#1e1e1e;letter-spacing:-0.65px;left:2174.5px;">10:30 PM (EST)</div>
<div class="t" style="top:1378.2px;font-size:24px;line-height:31px;color:#1e1e1e;letter-spacing:0.05px;left:2379.0px;">02 Hrs</div>
<div class="t" style="top:1410.2px;font-size:24px;line-height:31px;color:#1e1e1e;letter-spacing:0.28px;left:2379.0px;">00 Mins</div>
<div class="t" style="top:1378.2px;font-size:24px;line-height:31px;color:#1e1e1e;letter-spacing:0.05px;left:2516.5px;">12 Hrs</div>
<div class="t" style="top:1410.2px;font-size:24px;line-height:31px;color:#1e1e1e;letter-spacing:0.28px;left:2516.5px;">00 Mins</div>
<div class="b" style="left:2652px;top:1296px;width:2px;height:136px;background:#d6d6d6;"></div>
<svg class="b" style="left:2691px;top:1349px;" width="30" height="30" viewBox="0 0 30 30"><g fill="none" stroke="#0a84c8" stroke-width="2.100" stroke-linejoin="round" stroke-linecap="round"><path d="M1.700 19.500L19.500 2.700A6.200 6.200 0 0 1 28 11.600L10.400 28.200C7.500 27.500 2.800 23.500 1.700 19.500Z"/><path d="M1.700 19.500L0.900 29.300L7 28"/><path d="M6.700 23.300L22.200 8.500"/><path d="M20.300 3.500L27.200 10.400"/></g></svg>
<div class="b" style="left:1336px;top:1464px;width:1420px;height:88px;background:#ebf7f2;border:2px solid #9ad9ba;border-radius:8px;box-sizing:border-box;"></div>
<div class="b" style="left:1336px;top:1464px;width:4.5px;height:88px;background:#14b86a;border-radius:8px 0 0 8px;"></div>
<svg class="b" style="left:1355.75px;top:1494px;" width="24.5" height="28.5" viewBox="0 0 28 32"><path d="M14 0.500C6.500 0.500 0.500 6.400 0.500 13.700C0.500 21.500 8.500 27.500 14 31.700C19.500 27.500 27.500 21.500 27.500 13.700C27.500 6.400 21.500 0.500 14 0.500Z" fill="#14b86a"/><circle cx="14" cy="13.400" r="5.400" fill="#ebf7f2"/></svg>
<div class="t" style="top:1474.9px;font-size:19px;line-height:25px;color:#1e1e1e;letter-spacing:0.10px;-webkit-text-stroke:0.3px #1e1e1e;left:1400.5px;">Lorem Ipsum 1</div>
<div class="t" style="top:1505.5px;font-size:24px;line-height:31px;color:#1e1e1e;letter-spacing:0.62px;-webkit-text-stroke:0.25px #1e1e1e;left:1400.5px;">Princeton - 102994</div>
<svg class="b" style="left:1628px;top:1506px;" width="28" height="28" viewBox="0 0 28 28"><circle cx="14" cy="14" r="14" fill="#f7dcdc"/><path d="M14 5.500L22.500 20.500H5.500Z" fill="#f01414" stroke="#f01414" stroke-width="1.500" stroke-linejoin="round"/><path d="M14 10.500V15.500" stroke="#fff" stroke-width="2.200" stroke-linecap="round"/><circle cx="14" cy="18.400" r="1.200" fill="#fff"/></svg>
<div class="b" style="left:1776px;top:1488px;width:30px;height:40px;background:#e6f0cc;border-radius:6px 0 0 6px;"></div>
<div class="t" style="top:1497.1px;font-size:19px;line-height:25px;color:#00443f;letter-spacing:0.00px;font-weight:700;left:1791.0px;transform:translateX(-50%);">S</div>
<div class="b" style="left:1808px;top:1488px;width:30px;height:40px;background:#e6f0cc;"></div>
<div class="t" style="top:1497.1px;font-size:19px;line-height:25px;color:#00443f;letter-spacing:0.00px;font-weight:700;left:1823.0px;transform:translateX(-50%);">M</div>
<div class="b" style="left:1840px;top:1488px;width:30px;height:40px;background:#e6f0cc;"></div>
<div class="t" style="top:1497.1px;font-size:19px;line-height:25px;color:#00443f;letter-spacing:0.00px;font-weight:700;left:1855.0px;transform:translateX(-50%);">T</div>
<div class="b" style="left:1872px;top:1488px;width:30px;height:40px;background:#e6f0cc;"></div>
<div class="t" style="top:1497.1px;font-size:19px;line-height:25px;color:#00443f;letter-spacing:0.00px;font-weight:700;left:1887.0px;transform:translateX(-50%);">W</div>
<div class="b" style="left:1904px;top:1488px;width:30px;height:40px;background:#e6f0cc;"></div>
<div class="t" style="top:1497.1px;font-size:19px;line-height:25px;color:#00443f;letter-spacing:0.00px;font-weight:700;left:1919.0px;transform:translateX(-50%);">T</div>
<div class="b" style="left:1936px;top:1488px;width:30px;height:40px;background:#e6f0cc;"></div>
<div class="t" style="top:1497.1px;font-size:19px;line-height:25px;color:#00443f;letter-spacing:0.00px;font-weight:700;left:1951.0px;transform:translateX(-50%);">F</div>
<div class="b" style="left:1968px;top:1488px;width:30px;height:40px;background:#e6f0cc;border-radius:0 6px 6px 0;"></div>
<div class="t" style="top:1497.1px;font-size:19px;line-height:25px;color:#00443f;letter-spacing:0.00px;font-weight:700;left:1983.0px;transform:translateX(-50%);">S</div>
<div class="t" style="top:1492.2px;font-size:24px;line-height:31px;color:#1e1e1e;letter-spacing:0.29px;left:2056.0px;transform:translateX(-50%);">-</div>
<div class="b" style="left:2100px;top:1488px;width:40px;height:40px;background:#d9f0e4;border-radius:20px;"></div><div class="t" style="top:1492.8px;font-size:24px;line-height:31px;color:#1e1e1e;letter-spacing:0.29px;-webkit-text-stroke:0.3px #1e1e1e;left:2120.0px;transform:translateX(-50%);">1</div>
<div class="t" style="top:1478.2px;font-size:24px;line-height:31px;color:#1e1e1e;letter-spacing:0.14px;left:2174.5px;">8:00 PM to</div>
<div class="t" style="top:1510.2px;font-size:24px;line-height:31px;color:#1e1e1e;letter-spacing:-0.52px;left:2174.5px;">11:00 PM (EST)</div>
<div class="t" style="top:1478.2px;font-size:24px;line-height:31px;color:#1e1e1e;letter-spacing:0.05px;left:2379.0px;">01 Hrs</div>
<div class="t" style="top:1510.2px;font-size:24px;line-height:31px;color:#1e1e1e;letter-spacing:0.28px;left:2379.0px;">50 Mins</div>
<div class="t" style="top:1478.2px;font-size:24px;line-height:31px;color:#1e1e1e;letter-spacing:0.05px;left:2516.5px;">13 Hrs</div>
<div class="t" style="top:1510.2px;font-size:24px;line-height:31px;color:#1e1e1e;letter-spacing:0.28px;left:2516.5px;">25 Mins</div>
<div class="b" style="left:2652px;top:1484px;width:2px;height:48px;background:#d6d6d6;"></div>
<svg class="b" style="left:2691px;top:1493px;" width="30" height="30" viewBox="0 0 30 30"><g fill="none" stroke="#0a84c8" stroke-width="2.100" stroke-linejoin="round" stroke-linecap="round"><path d="M1.700 19.500L19.500 2.700A6.200 6.200 0 0 1 28 11.600L10.400 28.200C7.500 27.500 2.800 23.500 1.700 19.500Z"/><path d="M1.700 19.500L0.900 29.300L7 28"/><path d="M6.700 23.300L22.200 8.500"/><path d="M20.300 3.500L27.200 10.400"/></g></svg>
<div class="b" style="left:1336px;top:1564px;width:1420px;height:88px;background:#ebf7f2;border:2px solid #9ad9ba;border-radius:8px;box-sizing:border-box;"></div>
<div class="b" style="left:1336px;top:1564px;width:4.5px;height:88px;background:#14b86a;border-radius:8px 0 0 8px;"></div>
<svg class="b" style="left:1355.75px;top:1594px;" width="24.5" height="28.5" viewBox="0 0 28 32"><path d="M14 0.500C6.500 0.500 0.500 6.400 0.500 13.700C0.500 21.500 8.500 27.500 14 31.700C19.500 27.500 27.500 21.500 27.500 13.700C27.500 6.400 21.500 0.500 14 0.500Z" fill="#14b86a"/><circle cx="14" cy="13.400" r="5.400" fill="#ebf7f2"/></svg>
<div class="t" style="top:1574.9px;font-size:19px;line-height:25px;color:#1e1e1e;letter-spacing:0.18px;-webkit-text-stroke:0.3px #1e1e1e;left:1400.5px;">Lorem Ipsum 2</div>
<div class="t" style="top:1605.5px;font-size:24px;line-height:31px;color:#1e1e1e;letter-spacing:0.28px;-webkit-text-stroke:0.25px #1e1e1e;left:1400.5px;">Lakes View - 102077</div>
<div class="b" style="left:1642px;top:1602.5px;width:68px;height:36px;background:#d5ebc1;border-radius:7px;"></div>
<div class="t" style="top:1608.1px;font-size:20px;line-height:26px;color:#4f8d10;letter-spacing:-0.22px;font-weight:700;left:1676.0px;transform:translateX(-50%);">NEW</div>
<div class="b" style="left:1776px;top:1588px;width:30px;height:40px;background:#e6f0cc;border-radius:6px 0 0 6px;"></div>
<div class="t" style="top:1597.1px;font-size:19px;line-height:25px;color:#00443f;letter-spacing:0.00px;font-weight:700;left:1791.0px;transform:translateX(-50%);">S</div>
<div class="b" style="left:1808px;top:1588px;width:30px;height:40px;background:#e6f0cc;"></div>
<div class="t" style="top:1597.1px;font-size:19px;line-height:25px;color:#00443f;letter-spacing:0.00px;font-weight:700;left:1823.0px;transform:translateX(-50%);">M</div>
<div class="b" style="left:1840px;top:1588px;width:30px;height:40px;background:#e6f0cc;"></div>
<div class="t" style="top:1597.1px;font-size:19px;line-height:25px;color:#00443f;letter-spacing:0.00px;font-weight:700;left:1855.0px;transform:translateX(-50%);">T</div>
<div class="b" style="left:1872px;top:1588px;width:30px;height:40px;background:#e6f0cc;"></div>
<div class="t" style="top:1597.1px;font-size:19px;line-height:25px;color:#00443f;letter-spacing:0.00px;font-weight:700;left:1887.0px;transform:translateX(-50%);">W</div>
<div class="b" style="left:1904px;top:1588px;width:30px;height:40px;background:#e6f0cc;"></div>
<div class="t" style="top:1597.1px;font-size:19px;line-height:25px;color:#00443f;letter-spacing:0.00px;font-weight:700;left:1919.0px;transform:translateX(-50%);">T</div>
<div class="b" style="left:1936px;top:1588px;width:30px;height:40px;background:#f0f1f3;"></div>
<div class="t" style="top:1597.1px;font-size:19px;line-height:25px;color:#b9b9b9;letter-spacing:0.00px;-webkit-text-stroke:0.5px #b9b9b9;left:1951.0px;transform:translateX(-50%);">F</div>
<div class="b" style="left:1968px;top:1588px;width:30px;height:40px;background:#f0f1f3;border-radius:0 6px 6px 0;"></div>
<div class="t" style="top:1597.1px;font-size:19px;line-height:25px;color:#b9b9b9;letter-spacing:0.00px;-webkit-text-stroke:0.5px #b9b9b9;left:1983.0px;transform:translateX(-50%);">S</div>
<div class="t" style="top:1592.2px;font-size:24px;line-height:31px;color:#1e1e1e;letter-spacing:0.29px;left:2056.0px;transform:translateX(-50%);">-</div>
<div class="b" style="left:2100px;top:1588px;width:40px;height:40px;background:#d9f0e4;border-radius:20px;"></div><div class="t" style="top:1592.8px;font-size:24px;line-height:31px;color:#1e1e1e;letter-spacing:0.29px;-webkit-text-stroke:0.3px #1e1e1e;left:2120.0px;transform:translateX(-50%);">1</div>
<div class="t" style="top:1578.2px;font-size:24px;line-height:31px;color:#1e1e1e;letter-spacing:0.14px;left:2174.5px;">8:00 PM to</div>
<div class="t" style="top:1610.2px;font-size:24px;line-height:31px;color:#1e1e1e;letter-spacing:-0.52px;left:2174.5px;">11:00 PM (EST)</div>
<div class="t" style="top:1578.2px;font-size:24px;line-height:31px;color:#1e1e1e;letter-spacing:0.05px;left:2379.0px;">02 Hrs</div>
<div class="t" style="top:1610.2px;font-size:24px;line-height:31px;color:#1e1e1e;letter-spacing:0.28px;left:2379.0px;">55 Mins</div>
<div class="t" style="top:1578.2px;font-size:24px;line-height:31px;color:#1e1e1e;letter-spacing:0.05px;left:2516.5px;">14 Hrs</div>
<div class="t" style="top:1610.2px;font-size:24px;line-height:31px;color:#1e1e1e;letter-spacing:0.28px;left:2516.5px;">35 Mins</div>
<div class="b" style="left:2652px;top:1584px;width:2px;height:48px;background:#d6d6d6;"></div>
<svg class="b" style="left:2691px;top:1593px;" width="30" height="30" viewBox="0 0 30 30"><g fill="none" stroke="#0a84c8" stroke-width="2.100" stroke-linejoin="round" stroke-linecap="round"><path d="M1.700 19.500L19.500 2.700A6.200 6.200 0 0 1 28 11.600L10.400 28.200C7.500 27.500 2.800 23.500 1.700 19.500Z"/><path d="M1.700 19.500L0.900 29.300L7 28"/><path d="M6.700 23.300L22.200 8.500"/><path d="M20.300 3.500L27.200 10.400"/></g></svg>
</body></html>
